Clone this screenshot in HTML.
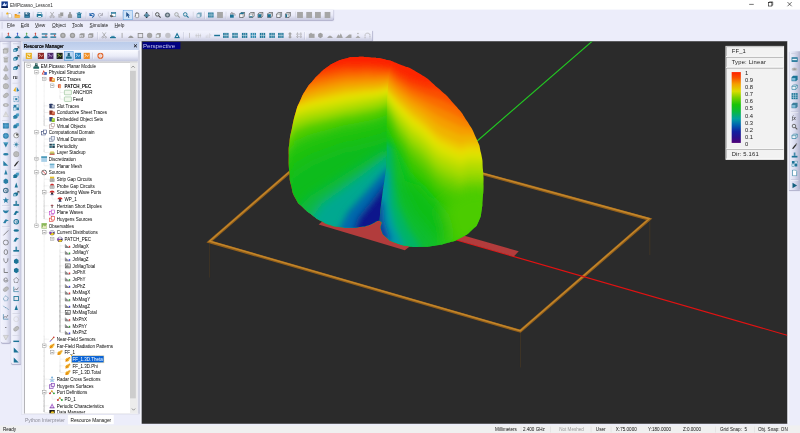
<!DOCTYPE html>
<html><head><meta charset="utf-8"><title>EMPicasso_Lesson1</title>
<style>
html,body{margin:0;padding:0;background:#ecedfa;overflow:hidden;width:800px;height:433px}
#root{position:absolute;left:0;top:0;width:1920px;height:1040px;transform:scale(0.4166667);transform-origin:0 0;
 font-family:"Liberation Sans",sans-serif;font-size:11px;color:#000;background:#ecedfa;overflow:hidden}
#root div,#root span,#root svg{position:absolute;box-sizing:border-box}
.ic{position:absolute}
.tb{background:linear-gradient(#f3f4fd 0%,#e9eaf8 55%,#c9cbe0 100%);border-radius:0 0 4px 0;box-shadow:0 2px 2px rgba(120,120,160,.5)}
.tbv{background:linear-gradient(90deg,#f3f4fd 0%,#e9eaf8 55%,#c4c6dc 100%);border-radius:0 0 4px 4px;box-shadow:1px 2px 2px rgba(120,120,160,.5)}
.grip{width:3px;border-left:2px solid #cbcde0}
.griph{height:3px;border-top:2px solid #cbcde0}
.t{white-space:nowrap;line-height:16px;height:16px}
#tree .t{font-size:10.8px}
.m{white-space:nowrap;top:53px;font-size:11.5px;line-height:16px;color:#1a1a1a}
.sb{white-space:nowrap;top:1023px;font-size:11px;line-height:16px;color:#111}
</style></head><body><div id="root">

<div style="left:0;top:0;width:1920px;height:23px;background:#fff"></div>
<svg style="left:3px;top:3px" width="16" height="16" viewBox="0 0 16 16"><rect width="16" height="16" fill="#123a8c"/><path d="M2 11 8 3l2 5 4-3-3 8z" fill="#dfe9ff"/><rect x="0" y="12" width="16" height="4" fill="#0a1f55"/></svg>
<div class="t" style="left:24px;top:4px;font-size:11px;color:#2a2a2a">EMPicasso_Lesson1</div>
<svg style="left:1780px;top:-2px" width="140" height="23" viewBox="0 0 140 23"><path d="M18 12.500h11" stroke="#000" stroke-width="1.300"/><rect x="64.5" y="8.500" width="8" height="8" fill="none" stroke="#000" stroke-width="1.300"/><path d="M66.500 8.500v-2h8v8h-2" fill="none" stroke="#000" stroke-width="1.300"/><path d="M110 7l10 10M120 7l-10 10" stroke="#000" stroke-width="1.400"/></svg>
<div class="tb" style="left:0;top:24px;width:800px;height:23px"></div>
<div class="grip" style="left:4px;top:29px;height:16px"></div>
<svg class="ic" style="left:14px;top:28px" width="16" height="16" viewBox="0 0 16 16"><path d="M5.500 4.500h5.500l3 3v7.500H5.500z" fill="#fff" stroke="#8a8a92"/><path d="M3.500 .5l1.100 2.300 2.400.3-1.800 1.700.5 2.500L3.500 6.100 1.300 7.300l.5-2.500L0 3.100l2.400-.3z" fill="#f2b21c"/></svg>
<svg class="ic" style="left:34px;top:28px" width="16" height="16" viewBox="0 0 16 16"><path d="M1 5.500h4.500l1.500 2H13v7H1z" fill="#e8961c"/><path d="M3 9h12.500l-2.500 5.500H1z" fill="#f7bc4c"/><path d="M9.500 4.500C10 2 12 1.500 14 2.500M14 2.500l-2.500-.6M14 2.500l-.8 2.300" stroke="#2a6fb0" fill="none" stroke-width="1.300"/></svg>
<svg class="ic" style="left:57px;top:28px" width="16" height="16" viewBox="0 0 16 16"><path d="M1.500 1.500h11l2 2v11h-13z" fill="#14557a"/><rect x="4" y="1.500" width="7" height="5" fill="#dfe9f2"/><rect x="8.500" y="2.300" width="1.700" height="3.200" fill="#14557a"/><rect x="3.500" y="9.500" width="9" height="5" fill="#3f86ad"/></svg>
<div style="position:absolute;left:79px;top:28px;width:1px;height:18px;background:#b4b6cc;box-shadow:1px 0 #fff"></div>
<svg class="ic" style="left:87px;top:28px" width="16" height="16" viewBox="0 0 16 16"><rect x="4" y="1.500" width="8" height="4.500" fill="#fff" stroke="#1b7396"/><rect x="1" y="5.500" width="14" height="7" rx="1.200" fill="#1b7396"/><rect x="4" y="10" width="8" height="4.500" fill="#fff" stroke="#1b7396"/><rect x="11.500" y="7" width="1.800" height="1.200" fill="#bfe6f4"/></svg>
<div style="position:absolute;left:110px;top:28px;width:1px;height:18px;background:#b4b6cc;box-shadow:1px 0 #fff"></div>
<svg class="ic" style="left:117px;top:28px" width="16" height="16" viewBox="0 0 16 16"><path d="M4 1 10.500 10.500M12 1 5.500 10.500" stroke="#9b9b9b" stroke-width="1.700"/><circle cx="4.500" cy="12.500" r="2" fill="none" stroke="#9b9b9b" stroke-width="1.500"/><circle cx="11.500" cy="12.500" r="2" fill="none" stroke="#9b9b9b" stroke-width="1.500"/></svg>
<svg class="ic" style="left:138px;top:28px" width="16" height="16" viewBox="0 0 16 16"><rect x="2" y="5.500" width="8" height="9" fill="#b2b2b6"/><rect x="6" y="1.500" width="8" height="9.500" fill="#9b9b9b" stroke="#e4e4ee" stroke-width=".8"/></svg>
<svg class="ic" style="left:160px;top:28px" width="16" height="16" viewBox="0 0 16 16"><path d="M3 15V8l5-6 5 6v7z" fill="#9b9b9b"/><rect x="6" y="1" width="4" height="2.500" fill="#9b9b9b"/></svg>
<svg class="ic" style="left:182px;top:28px" width="16" height="16" viewBox="0 0 16 16"><rect x="3.500" y="5.500" width="9" height="9.500" fill="#1b7396"/><rect x="2" y="2.800" width="12" height="2" fill="#1b7396"/><rect x="6" y="1" width="4" height="1.800" fill="#1b7396"/><path d="M6 7.500v6M8 7.500v6M10 7.500v6" stroke="#a9d6e8" stroke-width=".9"/></svg>
<div style="position:absolute;left:206px;top:28px;width:1px;height:18px;background:#b4b6cc;box-shadow:1px 0 #fff"></div>
<svg class="ic" style="left:213px;top:28px" width="16" height="16" viewBox="0 0 16 16"><path d="M3 3v6h6" fill="none" stroke="#1d5fa8" stroke-width="2.4"/><path d="M4 8C6 3 13 3 13 8 13 11 10 13 8 14" fill="none" stroke="#1d5fa8" stroke-width="2.4"/></svg>
<svg class="ic" style="left:233px;top:28px" width="16" height="16" viewBox="0 0 16 16"><path d="M13 3v6H7" fill="none" stroke="#a9a9b4" stroke-width="2.200"/><path d="M12 8C10 3 3 3 3 8 3 11 6 13 8 14" fill="none" stroke="#a9a9b4" stroke-width="2.200"/></svg>
<div style="position:absolute;left:259px;top:28px;width:1px;height:18px;background:#b4b6cc;box-shadow:1px 0 #fff"></div>
<svg class="ic" style="left:263px;top:28px" width="16" height="16" viewBox="0 0 16 16"><rect x="4" y="2" width="11" height="9" fill="#fff" stroke="#1b7396" stroke-width="1.200"/><rect x="4" y="2" width="11" height="2.800" fill="#1b7396"/><path d="M0 10l4.500-3v2h4v3.500h-4v2z" fill="#5a5a5a"/></svg>
<div style="position:absolute;left:293px;top:28px;width:1px;height:18px;background:#b4b6cc;box-shadow:1px 0 #fff"></div>
<div style="left:295px;top:25px;width:23px;height:23px;background:#cfe3f7;border:1px solid #3c8ad8"></div>
<svg class="ic" style="left:299px;top:28px" width="16" height="16" viewBox="0 0 16 16"><path d="M4 1 4 13 7 10 9.5 15 11.5 14 9 9.3 13 9Z" fill="#1d4f8c"/></svg>
<svg class="ic" style="left:321px;top:28px" width="16" height="16" viewBox="0 0 16 16"><path d="M4 9.500V5a1 1 0 012 0V3.200a1 1 0 012 0V3.600a1 1 0 012 0V5a1 1 0 012 0v6c0 2.500-1.500 4-4 4s-3.700-1.500-5-4.300c-.5-1 1-1.700 1.600-.7z" fill="#f4f4f4" stroke="#444" stroke-width="1.300"/></svg>
<svg class="ic" style="left:344px;top:28px" width="16" height="16" viewBox="0 0 16 16"><circle cx="8" cy="8.500" r="4.600" fill="#2f6d8c"/><path d="M8 0l3 3.500H5zM.5 9l3-3v5.500zM15.500 9l-3-3v5.500zM8 16l3-3H5z" fill="#27323a"/><ellipse cx="8" cy="8.500" rx="4.600" ry="1.800" fill="none" stroke="#cfe8f4" stroke-width=".8"/></svg>
<div style="position:absolute;left:365px;top:28px;width:1px;height:18px;background:#b4b6cc;box-shadow:1px 0 #fff"></div>
<svg class="ic" style="left:371px;top:28px" width="16" height="16" viewBox="0 0 16 16"><circle cx="6.5" cy="6.5" r="4.3" fill="#dfe6ee" stroke="#444" stroke-width="2"/><path d="M9.5 9.5 14.5 14.5" stroke="#444" stroke-width="2.6"/></svg>
<svg class="ic" style="left:394px;top:28px" width="16" height="16" viewBox="0 0 16 16"><circle cx="8" cy="8" r="6" fill="#5d6d78"/><circle cx="8" cy="8" r="3" fill="#d5dce2"/><rect x="1" y="7" width="14" height="2" fill="#5d6d78" opacity=".7"/></svg>
<svg class="ic" style="left:417px;top:28px" width="16" height="16" viewBox="0 0 16 16"><circle cx="6.5" cy="6.5" r="4.3" fill="#dfe6ee" stroke="#a2a2a2" stroke-width="2"/><path d="M9.5 9.5 14.5 14.5" stroke="#a2a2a2" stroke-width="2.6"/></svg>
<svg class="ic" style="left:438px;top:28px" width="16" height="16" viewBox="0 0 16 16"><circle cx="6.5" cy="6.5" r="4.3" fill="#dfe6ee" stroke="#1b7396" stroke-width="2"/><path d="M9.5 9.5 14.5 14.5" stroke="#1b7396" stroke-width="2.6"/></svg>
<div style="position:absolute;left:463px;top:28px;width:1px;height:18px;background:#b4b6cc;box-shadow:1px 0 #fff"></div>
<svg class="ic" style="left:470px;top:28px" width="16" height="16" viewBox="0 0 16 16"><path d="M2 5 6 2h8v9l-4 3H2Z" fill="#7aa7bd"/><rect x="3.4" y="6.2" width="6" height="6.4" fill="#e8eef6"/></svg>
<div style="position:absolute;left:491px;top:28px;width:1px;height:18px;background:#b4b6cc;box-shadow:1px 0 #fff"></div>
<svg class="ic" style="left:498px;top:28px" width="16" height="16" viewBox="0 0 16 16"><rect x="1.5" y="2" width="13" height="12" fill="#1b7396"/><path d="M1.5 8h13M6 2v12M10.5 2v12" stroke="#dfeaf2" stroke-width="1.3"/></svg>
<svg class="ic" style="left:520px;top:28px" width="16" height="16" viewBox="0 0 16 16"><rect x="1" y=".5" width="14" height="15" fill="#a6a6a6"/></svg>
<div style="position:absolute;left:542px;top:28px;width:1px;height:18px;background:#b4b6cc;box-shadow:1px 0 #fff"></div>
<svg class="ic" style="left:550px;top:28px" width="16" height="16" viewBox="0 0 16 16"><rect x="2" y="7" width="9" height="7.500" fill="#1b7396"/><path d="M4 7V5a2.500 2.500 0 015 0v2" fill="none" stroke="#444" stroke-width="1.500"/><path d="M10 4c3 0 5 2 4 6" fill="none" stroke="#555" stroke-width="1.300"/></svg>
<svg class="ic" style="left:573px;top:28px" width="16" height="16" viewBox="0 0 16 16"><path d="M2 5.500 5.500 2h8.500v8.500L10.500 14H2z" fill="#f4f6fa" stroke="#3c3c3c" stroke-width="1.400"/><path d="M2 5.500h8.500V14M10.500 5.500 14 2" stroke="#3c3c3c" stroke-width="1" fill="none"/><path d="M5.500 2h8.500L10.500 5.500H2z" fill="#1b7396"/></svg>
<svg class="ic" style="left:596px;top:28px" width="16" height="16" viewBox="0 0 16 16"><path d="M2 5.500 5.500 2h8.500v8.500L10.500 14H2z" fill="#f4f6fa" stroke="#3c3c3c" stroke-width="1.400"/><path d="M2 5.500h8.500V14M10.500 5.500 14 2" stroke="#3c3c3c" stroke-width="1" fill="none"/><path d="M2.600 11h7.300v2.400H2.600z" fill="#1b7396"/></svg>
<svg class="ic" style="left:617px;top:28px" width="16" height="16" viewBox="0 0 16 16"><path d="M2 5.500 5.500 2h8.500v8.500L10.500 14H2z" fill="#f4f6fa" stroke="#3c3c3c" stroke-width="1.400"/><path d="M2 5.500h8.500V14M10.500 5.500 14 2" stroke="#3c3c3c" stroke-width="1" fill="none"/><path d="M2.600 6.100h7.300v7.300H2.600z" fill="#1b7396"/></svg>
<svg class="ic" style="left:640px;top:28px" width="16" height="16" viewBox="0 0 16 16"><path d="M2 5.500 5.500 2h8.500v8.500L10.500 14H2z" fill="#f4f6fa" stroke="#3c3c3c" stroke-width="1.400"/><path d="M2 5.500h8.500V14M10.500 5.500 14 2" stroke="#3c3c3c" stroke-width="1" fill="none"/><path d="M2.600 6.100h7.300v7.300H2.600z" fill="#1b7396"/></svg>
<svg class="ic" style="left:662px;top:28px" width="16" height="16" viewBox="0 0 16 16"><path d="M2 5.500 5.500 2h8.500v8.500L10.500 14H2z" fill="#f4f6fa" stroke="#3c3c3c" stroke-width="1.400"/><path d="M2 5.500h8.500V14M10.500 5.500 14 2" stroke="#3c3c3c" stroke-width="1" fill="none"/><path d="M10.500 5.500 14 2v8.500L10.500 14z" fill="#8a96a0"/></svg>
<svg class="ic" style="left:683px;top:28px" width="16" height="16" viewBox="0 0 16 16"><path d="M2 5.500 5.500 2h8.500v8.500L10.500 14H2z" fill="#f4f6fa" stroke="#3c3c3c" stroke-width="1.400"/><path d="M2 5.500h8.500V14M10.500 5.500 14 2" stroke="#3c3c3c" stroke-width="1" fill="none"/><path d="M2.600 6.100h3.500v7.300H2.600z" fill="#1b7396"/></svg>
<div style="position:absolute;left:708px;top:28px;width:1px;height:18px;background:#b4b6cc;box-shadow:1px 0 #fff"></div>
<svg class="ic" style="left:712px;top:28px" width="16" height="16" viewBox="0 0 16 16"><rect x="1" y=".5" width="14" height="15" fill="#a6a6a6"/></svg>
<svg class="ic" style="left:734px;top:28px" width="16" height="16" viewBox="0 0 16 16"><rect x="1" y=".5" width="14" height="15" fill="#a6a6a6"/></svg>
<svg class="ic" style="left:755px;top:28px" width="16" height="16" viewBox="0 0 16 16"><rect x="1" y=".5" width="14" height="15" fill="#a6a6a6"/></svg>
<svg class="ic" style="left:778px;top:28px" width="16" height="16" viewBox="0 0 16 16"><rect x="1" y=".5" width="14" height="15" fill="#a6a6a6"/></svg>
<div class="grip" style="left:4px;top:53px;height:16px"></div>
<div class="m" style="left:17px"><u>F</u>ile</div>
<div class="m" style="left:50px"><u>E</u>dit</div>
<div class="m" style="left:84px"><u>V</u>iew</div>
<div class="m" style="left:125px"><u>O</u>bject</div>
<div class="m" style="left:173px"><u>T</u>ools</div>
<div class="m" style="left:215px"><u>S</u>imulate</div>
<div class="m" style="left:275px"><u>H</u>elp</div>
<div class="tb" style="left:0;top:73px;width:893px;height:25px"></div>
<div class="grip" style="left:4px;top:78px;height:16px"></div>
<svg class="ic" style="left:12px;top:77px" width="16" height="16" viewBox="0 0 16 16"><path d="M1 11.500h14V15H1z" fill="#1b7396"/><path d="M3 11.500l2-2.500h6l2 2.500z" fill="#4a93b3"/><rect x="7" y="2" width="2" height="7" fill="#c8463a"/><path d="M5.500 4 8 .8 10.500 4z" fill="#c8463a"/></svg>
<svg class="ic" style="left:34px;top:77px" width="16" height="16" viewBox="0 0 16 16"><path d="M1 11.500h14V15H1z" fill="#1b7396"/><path d="M3 11.500l2-2.500h6l2 2.500z" fill="#4a93b3"/><rect x="7" y="2" width="2" height="7" fill="#3a56c8"/><path d="M5.500 4 8 .8 10.500 4z" fill="#3a56c8"/></svg>
<svg class="ic" style="left:56px;top:77px" width="16" height="16" viewBox="0 0 16 16"><path d="M1 11.500h14V15H1z" fill="#1b7396"/><path d="M3 11.500l2-2.500h6l2 2.500z" fill="#4a93b3"/><rect x="7" y="2" width="2" height="7" fill="#58a848"/><path d="M5.500 4 8 .8 10.500 4z" fill="#58a848"/></svg>
<svg class="ic" style="left:77px;top:77px" width="16" height="16" viewBox="0 0 16 16"><path d="M1 11.500h14V15H1z" fill="#1b7396"/><path d="M3 11.500l2-2.500h6l2 2.500z" fill="#4a93b3"/><rect x="7" y="2" width="2" height="7" fill="#c8463a"/><path d="M5.500 4 8 .8 10.500 4z" fill="#c8463a"/></svg>
<svg class="ic" style="left:99px;top:77px" width="16" height="16" viewBox="0 0 16 16"><rect x="1" y="3" width="14" height="3.200" fill="#1b7396"/><rect x="1" y="10.500" width="14" height="3.200" fill="#1b7396"/><rect x="10" y="6.200" width="2.500" height="4.300" fill="#c8463a"/><rect x="3" y="6.500" width="7" height="1" fill="#bcd"/></svg>
<svg class="ic" style="left:120px;top:77px" width="16" height="16" viewBox="0 0 16 16"><rect x="1" y="3" width="14" height="3.200" fill="#1b7396"/><rect x="1" y="10.500" width="14" height="3.200" fill="#1b7396"/><rect x="10" y="6.200" width="2.500" height="4.300" fill="#c8463a"/><rect x="3" y="6.500" width="7" height="1" fill="#bcd"/></svg>
<svg class="ic" style="left:143px;top:77px" width="16" height="16" viewBox="0 0 16 16"><circle cx="8" cy="8" r="6.500" fill="#9b9b9b"/><circle cx="8" cy="8" r="3.200" fill="#b8b8b8"/></svg>
<svg class="ic" style="left:166px;top:77px" width="16" height="16" viewBox="0 0 16 16"><circle cx="8" cy="8" r="6.500" fill="#9b9b9b"/><circle cx="8" cy="8" r="3.200" fill="#b8b8b8"/></svg>
<svg class="ic" style="left:189px;top:77px" width="16" height="16" viewBox="0 0 16 16"><path d="M2 5.500 5 2.500h9v8.500l-3 3H2z" fill="#9b9b9b"/><rect x="3.500" y="7" width="6" height="5.500" fill="#dcdce4"/><rect x="5.500" y="8.200" width="1.800" height="3.200" fill="#9b9b9b"/></svg>
<svg class="ic" style="left:210px;top:77px" width="16" height="16" viewBox="0 0 16 16"><path d="M2 5.500 5 2.500h9v8.500l-3 3H2z" fill="#9b9b9b"/><rect x="3.500" y="7" width="6" height="5.500" fill="#dcdce4"/><rect x="5.500" y="8.200" width="1.800" height="3.200" fill="#9b9b9b"/></svg>
<div style="position:absolute;left:234px;top:77px;width:1px;height:18px;background:#b4b6cc;box-shadow:1px 0 #fff"></div>
<svg class="ic" style="left:242px;top:77px" width="16" height="16" viewBox="0 0 16 16"><path d="M4 1 10.500 10.500M12 1 5.500 10.500" stroke="#9b9b9b" stroke-width="1.700"/><circle cx="4.500" cy="12.500" r="2" fill="none" stroke="#9b9b9b" stroke-width="1.500"/><circle cx="11.500" cy="12.500" r="2" fill="none" stroke="#9b9b9b" stroke-width="1.500"/></svg>
<svg class="ic" style="left:263px;top:77px" width="16" height="16" viewBox="0 0 16 16"><path d="M1 11.500h14V15H1z" fill="#1b7396"/><path d="M3 11.500l2-2.500h6l2 2.500z" fill="#4a93b3"/><rect x="7" y="2" width="2" height="7" fill="#e8eef4"/><path d="M5.500 4 8 .8 10.500 4z" fill="#e8eef4"/></svg>
<svg class="ic" style="left:285px;top:77px" width="16" height="16" viewBox="0 0 16 16"><rect x="7" y="2" width="2" height="12" fill="#9b9b9b"/></svg>
<svg class="ic" style="left:306px;top:77px" width="16" height="16" viewBox="0 0 16 16"><path d="M1 14Q8 2 15 14Z" fill="#9b9b9b"/></svg>
<svg class="ic" style="left:329px;top:77px" width="16" height="16" viewBox="0 0 16 16"><rect x="2.5" y="3.5" width="11" height="10" fill="#e6e6ee" stroke="#8a8a8a" stroke-width="2"/></svg>
<svg class="ic" style="left:351px;top:77px" width="16" height="16" viewBox="0 0 16 16"><circle cx="8" cy="8" r="6.5" fill="#a5a5a5"/></svg>
<svg class="ic" style="left:372px;top:77px" width="16" height="16" viewBox="0 0 16 16"><path d="M2 5 6 2h8v9l-4 3H2Z" fill="#a5a5a5"/><rect x="3.4" y="6.2" width="6" height="6.4" fill="#e8eef6"/></svg>
<svg class="ic" style="left:395px;top:77px" width="16" height="16" viewBox="0 0 16 16"><circle cx="8" cy="8" r="6.5" fill="#c2c2c8"/></svg>
<svg class="ic" style="left:417px;top:77px" width="16" height="16" viewBox="0 0 16 16"><path d="M8 1 15 15H1Z" fill="#1b7396"/><path d="M8 7 10.5 12h-5z" fill="#fff"/></svg>
<div style="position:absolute;left:440px;top:77px;width:1px;height:18px;background:#b4b6cc;box-shadow:1px 0 #fff"></div>
<svg class="ic" style="left:447px;top:77px" width="16" height="16" viewBox="0 0 16 16"><rect x="7" y="2" width="2" height="12" fill="#bdbdbd"/></svg>
<svg class="ic" style="left:468px;top:77px" width="16" height="16" viewBox="0 0 16 16"><path d="M3 4v9M8 3v11M13 4v9M1 8.500h14" stroke="#b8b8b8" stroke-width="1.100" fill="none"/></svg>
<svg class="ic" style="left:492px;top:77px" width="16" height="16" viewBox="0 0 16 16"><path d="M3 8v6M7 6v8M11 3v11M14 5v4" stroke="#c2c2c2" stroke-width="1.100" fill="none"/></svg>
<svg class="ic" style="left:513px;top:77px" width="16" height="16" viewBox="0 0 16 16"><rect x="1" y="6.5" width="14" height="3.4" fill="#1b7396"/></svg>
<svg class="ic" style="left:534px;top:77px" width="16" height="16" viewBox="0 0 16 16"><rect x="1.5" y="2" width="13" height="12" fill="#1b7396"/><path d="M1.5 8h13M6 2v12M10.5 2v12" stroke="#dfeaf2" stroke-width="1.3"/></svg>
<svg class="ic" style="left:556px;top:77px" width="16" height="16" viewBox="0 0 16 16"><rect x="1.5" y="2" width="13" height="12" fill="#1b7396"/><path d="M1.5 8h13M6 2v12M10.5 2v12" stroke="#dfeaf2" stroke-width="1.3"/></svg>
<svg class="ic" style="left:579px;top:77px" width="16" height="16" viewBox="0 0 16 16"><rect x="1.5" y="2" width="13" height="12" fill="#1b7396"/><path d="M1.5 8h13M6 2v12M10.5 2v12" stroke="#dfeaf2" stroke-width="1.3"/></svg>
<svg class="ic" style="left:600px;top:77px" width="16" height="16" viewBox="0 0 16 16"><rect x="1.5" y="2" width="13" height="12" fill="#2b86ad"/><path d="M1.5 8h13M6 2v12M10.5 2v12" stroke="#dfeaf2" stroke-width="1.3"/></svg>
<svg class="ic" style="left:622px;top:77px" width="16" height="16" viewBox="0 0 16 16"><rect x="1.5" y="2" width="13" height="12" fill="#1b7396"/><path d="M1.5 8h13M6 2v12M10.5 2v12" stroke="#dfeaf2" stroke-width="1.3"/></svg>
<svg class="ic" style="left:645px;top:77px" width="16" height="16" viewBox="0 0 16 16"><rect x="1.5" y="2" width="13" height="12" fill="#1b7396"/><path d="M1.5 8h13M6 2v12M10.5 2v12" stroke="#dfeaf2" stroke-width="1.3"/></svg>
<svg class="ic" style="left:666px;top:77px" width="16" height="16" viewBox="0 0 16 16"><rect x="1.5" y="2" width="13" height="12" fill="#1b7396"/><path d="M1.5 8h13M6 2v12M10.5 2v12" stroke="#dfeaf2" stroke-width="1.3"/></svg>
<svg class="ic" style="left:688px;top:77px" width="16" height="16" viewBox="0 0 16 16"><path d="M8 0 13 5H10v6h3L8 16 3 11h3V5H3z" fill="#a4a4a4"/></svg>
<svg class="ic" style="left:710px;top:77px" width="16" height="16" viewBox="0 0 16 16"><path d="M4 1v14M12 1v14M1 5h14M1 11h14" stroke="#9a9a9a" stroke-width="1.800" stroke-dasharray="3 2"/></svg>
<div style="position:absolute;left:731px;top:77px;width:1px;height:18px;background:#b4b6cc;box-shadow:1px 0 #fff"></div>
<svg class="ic" style="left:740px;top:77px" width="16" height="16" viewBox="0 0 16 16"><rect x="1" y="4" width="14" height="10" fill="#a4a4a4"/><rect x="4" y="2" width="5" height="2" fill="#a4a4a4"/></svg>
<svg class="ic" style="left:761px;top:77px" width="16" height="16" viewBox="0 0 16 16"><path d="M8 1.500 13.500 4.700v6.600L8 14.500 2.500 11.300V4.700z" fill="#a0a0a0"/></svg>
<svg class="ic" style="left:784px;top:77px" width="16" height="16" viewBox="0 0 16 16"><path d="M1 14Q8 2 15 14Z" fill="#a4a4a4"/></svg>
<svg class="ic" style="left:807px;top:77px" width="16" height="16" viewBox="0 0 16 16"><path d="M0 14 5 5l3 4 3-6 5 11z" fill="#a4a4a4"/></svg>
<svg class="ic" style="left:828px;top:77px" width="16" height="16" viewBox="0 0 16 16"><path d="M0 14 10 6h6v8z" fill="#a4a4a4"/></svg>
<svg class="ic" style="left:851px;top:77px" width="16" height="16" viewBox="0 0 16 16"><circle cx="8" cy="3.500" r="1.800" fill="#a9a9a9"/><path d="M2 14 8 8l6 6z" fill="#a9a9a9"/></svg>
<svg class="ic" style="left:874px;top:77px" width="16" height="16" viewBox="0 0 16 16"><path d="M2 15V7c0-6 12-6 12 0v8" fill="none" stroke="#a4a4a4" stroke-width="2" stroke-dasharray="3 1.500"/></svg>
<div class="tbv" style="left:2px;top:100px;width:23px;height:722px"></div>
<div class="griph" style="left:6px;top:104px;width:16px"></div>
<div class="tbv" style="left:27px;top:100px;width:24px;height:773px"></div>
<div class="griph" style="left:31px;top:104px;width:16px"></div>
<svg class="ic" style="left:6px;top:113px" width="16" height="16" viewBox="0 0 16 16"><path d="M1.500 5 5 1.500h9.500v9.500L11 14.500H1.500z" fill="#b9b9b9"/><rect x="1.500" y="5" width="9.500" height="9.500" fill="#cacaca" stroke="#8c8c8c"/></svg>
<svg class="ic" style="left:6px;top:135px" width="16" height="16" viewBox="0 0 16 16"><rect x="3" y="3.500" width="10" height="9.500" fill="#bcbcbc"/><ellipse cx="8" cy="13" rx="5" ry="2" fill="#b0b0b0"/><ellipse cx="8" cy="3.500" rx="5" ry="2" fill="#dedede" stroke="#8c8c8c"/></svg>
<svg class="ic" style="left:6px;top:156px" width="16" height="16" viewBox="0 0 16 16"><path d="M8 1 13.500 12.500c0 3-11 3-11 0z" fill="#bcbcbc" stroke="#8e8e8e"/></svg>
<svg class="ic" style="left:6px;top:177px" width="16" height="16" viewBox="0 0 16 16"><path d="M8 1 14.500 12 8 15 1.500 12z" fill="#c0c0c0" stroke="#8c8c8c"/><path d="M8 1v14" stroke="#8e8e8e"/></svg>
<svg class="ic" style="left:6px;top:199px" width="16" height="16" viewBox="0 0 16 16"><circle cx="8" cy="8" r="6.500" fill="#bebebe" stroke="#8e8e8e"/><path d="M8 1.500v13" stroke="#b0b0b0"/></svg>
<svg class="ic" style="left:6px;top:221px" width="16" height="16" viewBox="0 0 16 16"><ellipse cx="8" cy="8" rx="7" ry="4.500" transform="rotate(-35 8 8)" fill="#bcbcbc" stroke="#8e8e8e"/></svg>
<svg class="ic" style="left:6px;top:244px" width="16" height="16" viewBox="0 0 16 16"><ellipse cx="8" cy="8" rx="6.500" ry="3.600" fill="#bebebe" stroke="#8e8e8e"/><ellipse cx="8" cy="8" rx="2.500" ry="1" fill="#f0f0f4"/></svg>
<svg class="ic" style="left:6px;top:266px" width="16" height="16" viewBox="0 0 16 16"><path d="M8 2 14 14H2z" fill="#e6e6e6" stroke="#b4b4b4"/><path d="M8 6v5" stroke="#b4b4b4"/></svg>
<div style="position:absolute;left:5px;top:288px;width:18px;height:1px;background:#b4b6cc;box-shadow:0 1px #fff"></div>
<svg class="ic" style="left:6px;top:294px" width="16" height="16" viewBox="0 0 16 16"><rect x="1.500" y="2.500" width="13" height="11" fill="#3a8fc0" stroke="#1f6f96" stroke-width="1.400"/><path d="M1.500 8h13M8 2.500v11" stroke="#8cc4e0" stroke-width=".8"/></svg>
<svg class="ic" style="left:6px;top:318px" width="16" height="16" viewBox="0 0 16 16"><circle cx="8" cy="8" r="6.300" fill="#3a8fc0" stroke="#1f6f96" stroke-width="1.400"/><path d="M1.700 8h12.600M8 1.700v12.600" stroke="#8cc4e0" stroke-width=".8"/></svg>
<svg class="ic" style="left:6px;top:339px" width="16" height="16" viewBox="0 0 16 16"><path d="M2 3h12L8 15z" fill="#2a7fa6"/><ellipse cx="8" cy="3.500" rx="6" ry="2" fill="#6fb4d4"/></svg>
<svg class="ic" style="left:6px;top:362px" width="16" height="16" viewBox="0 0 16 16"><ellipse cx="8" cy="8" rx="6.500" ry="3" fill="#2a7fa6"/></svg>
<svg class="ic" style="left:6px;top:384px" width="16" height="16" viewBox="0 0 16 16"><path d="M2 2v12h12z" fill="#2a7fa6"/></svg>
<svg class="ic" style="left:6px;top:405px" width="16" height="16" viewBox="0 0 16 16"><path d="M8 2 12 14H4z" fill="#2a7fa6"/></svg>
<svg class="ic" style="left:6px;top:427px" width="16" height="16" viewBox="0 0 16 16"><path d="M8 1.500 13.500 4.700v6.600L8 14.500 2.500 11.300V4.700z" fill="#2a7fa6"/></svg>
<svg class="ic" style="left:6px;top:449px" width="16" height="16" viewBox="0 0 16 16"><circle cx="8" cy="8" r="5.500" fill="none" stroke="#3a6a86" stroke-width="2.400"/><circle cx="9" cy="8.500" r="2" fill="none" stroke="#3a6a86" stroke-width="1.500"/></svg>
<svg class="ic" style="left:6px;top:472px" width="16" height="16" viewBox="0 0 16 16"><path d="M8 1l2 5 5.500.3-4.300 3.400 1.500 5.300L8 12l-4.700 3 1.500-5.300L.5 6.300 6 6z" fill="#2a7fa6"/></svg>
<div style="position:absolute;left:5px;top:493px;width:18px;height:1px;background:#b4b6cc;box-shadow:0 1px #fff"></div>
<svg class="ic" style="left:6px;top:499px" width="16" height="16" viewBox="0 0 16 16"><path d="M1 5c2 2 12 2 14 0 0 10-14 10-14 0z" fill="#2a7fa6"/></svg>
<svg class="ic" style="left:6px;top:522px" width="16" height="16" viewBox="0 0 16 16"><path d="M1 13c3-1 3-8 7-9 3 0 3 3 7 2-2 3-5 2-6 4s-1 4-3 4z" fill="#2a7fa6"/></svg>
<div style="position:absolute;left:5px;top:544px;width:18px;height:1px;background:#b4b6cc;box-shadow:0 1px #fff"></div>
<svg class="ic" style="left:6px;top:551px" width="16" height="16" viewBox="0 0 16 16"><path d="M2 14 14 2" stroke="#444" stroke-width="1.400"/></svg>
<svg class="ic" style="left:6px;top:574px" width="16" height="16" viewBox="0 0 16 16"><circle cx="8" cy="8" r="6" fill="none" stroke="#555" stroke-width="1.500"/></svg>
<svg class="ic" style="left:6px;top:597px" width="16" height="16" viewBox="0 0 16 16"><ellipse cx="8" cy="8" rx="4.200" ry="6" fill="none" stroke="#555" stroke-width="1.500"/></svg>
<svg class="ic" style="left:6px;top:618px" width="16" height="16" viewBox="0 0 16 16"><path d="M3 2c0 14 10 14 10 0" fill="none" stroke="#555" stroke-width="1.500"/></svg>
<svg class="ic" style="left:6px;top:642px" width="16" height="16" viewBox="0 0 16 16"><path d="M4 2v10h9" fill="none" stroke="#555" stroke-width="1.700"/></svg>
<svg class="ic" style="left:6px;top:664px" width="16" height="16" viewBox="0 0 16 16"><path d="M13 8a5 5 0 11-5-5 3.500 3.500 0 11-3.500 3.500" fill="none" stroke="#666" stroke-width="1.400"/></svg>
<svg class="ic" style="left:6px;top:686px" width="16" height="16" viewBox="0 0 16 16"><ellipse cx="8" cy="8" rx="7" ry="4.500" transform="rotate(-35 8 8)" fill="#bcbcbc" stroke="#8e8e8e"/></svg>
<svg class="ic" style="left:6px;top:708px" width="16" height="16" viewBox="0 0 16 16"><path d="M8 2 14 7 11 14H4L2 7z" fill="none" stroke="#2a6f96" stroke-width="1.600" stroke-dasharray="2 1.500"/></svg>
<svg class="ic" style="left:6px;top:730px" width="16" height="16" viewBox="0 0 16 16"><path d="M2 4 6 8 10 9 14 13" fill="none" stroke="#2a6f96" stroke-width="1.800" stroke-dasharray="3 1.500"/></svg>
<svg class="ic" style="left:6px;top:752px" width="16" height="16" viewBox="0 0 16 16"><path d="M2 2v12h12" fill="none" stroke="#2a6f96" stroke-width="1.500"/><path d="M3 11 6 7l3 3 4-6" fill="none" stroke="#333" stroke-width="1.200"/></svg>
<svg class="ic" style="left:6px;top:778px" width="16" height="16" viewBox="0 0 16 16"><circle cx="8" cy="8" r="1.300" fill="#333"/></svg>
<svg class="ic" style="left:6px;top:802px" width="16" height="16" viewBox="0 0 16 16"><path d="M2 3h12L8 14z" fill="#dcdcdc" stroke="#aaa"/></svg>
<svg class="ic" style="left:31px;top:111px" width="16" height="16" viewBox="0 0 16 16"><path d="M1 7 5 4h7v6l-4 3H1z" fill="#1b7396"/><rect x="2" y="8" width="5" height="4" fill="#9fd0e6"/><path d="M10 1h5v5" stroke="#222" stroke-width="1.500" fill="none"/><path d="M15 1 10 6" stroke="#222" stroke-width="1.300"/></svg>
<svg class="ic" style="left:31px;top:132px" width="16" height="16" viewBox="0 0 16 16"><path d="M1 7 5 4h7v6l-4 3H1z" fill="#1b7396"/><rect x="2" y="8" width="5" height="4" fill="#9fd0e6"/><path d="M10 1h5v5" stroke="#222" stroke-width="1.500" fill="none"/><path d="M15 1 10 6" stroke="#222" stroke-width="1.300"/></svg>
<svg class="ic" style="left:31px;top:155px" width="16" height="16" viewBox="0 0 16 16"><path d="M1 7 5 4h7v6l-4 3H1z" fill="#1b7396"/><rect x="2" y="8" width="5" height="4" fill="#9fd0e6"/><path d="M10 1h5v5" stroke="#222" stroke-width="1.500" fill="none"/><path d="M15 1 10 6" stroke="#222" stroke-width="1.300"/></svg>
<svg class="ic" style="left:31px;top:178px" width="16" height="16" viewBox="0 0 16 16"><text x="0" y="12" font-family="Liberation Sans,sans-serif" font-weight="bold" font-size="11" fill="#222">ru</text></svg>
<div style="position:absolute;left:30px;top:199px;width:18px;height:1px;background:#b4b6cc;box-shadow:0 1px #fff"></div>
<svg class="ic" style="left:31px;top:206px" width="16" height="16" viewBox="0 0 16 16"><path d="M7 2v12L1 12z" fill="#e8b020"/><path d="M9 2v12l6-2z" fill="#2a7fb0"/></svg>
<svg class="ic" style="left:31px;top:230px" width="16" height="16" viewBox="0 0 16 16"><rect x="2" y="2" width="12" height="12" fill="none" stroke="#2a7fa6" stroke-width="1.500" stroke-dasharray="2 1.300"/><rect x="5.500" y="5.500" width="5" height="5" fill="#2a7fa6"/></svg>
<svg class="ic" style="left:31px;top:250px" width="16" height="16" viewBox="0 0 16 16"><rect x="1.500" y="1.500" width="6" height="6" fill="#2a7fa6"/><rect x="8.500" y="8.500" width="6" height="6" fill="#2a7fa6"/><rect x="8.500" y="1.500" width="6" height="6" fill="#cfe4f0" stroke="#2a7fa6"/><rect x="1.500" y="8.500" width="6" height="6" fill="#cfe4f0" stroke="#2a7fa6"/></svg>
<svg class="ic" style="left:31px;top:271px" width="16" height="16" viewBox="0 0 16 16"><path d="M1 8 4 5h7v6l-3 3H1z" fill="#2a7fa6"/><path d="M6 4 9 1h6v6l-3 3" fill="#4a9cc4" stroke="#e8eef4" stroke-width=".7"/></svg>
<svg class="ic" style="left:31px;top:294px" width="16" height="16" viewBox="0 0 16 16"><path d="M1 8 4 5h7v6l-3 3H1z" fill="#2a7fa6"/><path d="M6 4 9 1h6v6l-3 3" fill="#4a9cc4" stroke="#e8eef4" stroke-width=".7"/></svg>
<svg class="ic" style="left:31px;top:317px" width="16" height="16" viewBox="0 0 16 16"><circle cx="8" cy="8" r="6" fill="#f4f4f4" stroke="#555" stroke-width="1.300"/><path d="M8 8V3.500A4.500 4.500 0 0112.500 8z" fill="#333"/></svg>
<svg class="ic" style="left:31px;top:339px" width="16" height="16" viewBox="0 0 16 16"><circle cx="8" cy="8" r="3" fill="#3d87a8"/><path d="M8 1v14M1 8h14M3 3l10 10M13 3 3 13" stroke="#3d87a8" stroke-width="1"/></svg>
<svg class="ic" style="left:31px;top:362px" width="16" height="16" viewBox="0 0 16 16"><circle cx="8" cy="8" r="6.500" fill="#bebebe" stroke="#8e8e8e"/><path d="M8 1.500v13" stroke="#b0b0b0"/></svg>
<svg class="ic" style="left:31px;top:384px" width="16" height="16" viewBox="0 0 16 16"><path d="M3 13 10 4l2.500 2L5.500 15 2.500 15.500z" fill="#2a2a2a"/><path d="M10.500 3.500 12.500 1.500 14.500 3.500 12.800 5.500z" fill="#555"/></svg>
<div style="position:absolute;left:30px;top:407px;width:18px;height:1px;background:#b4b6cc;box-shadow:0 1px #fff"></div>
<svg class="ic" style="left:31px;top:413px" width="16" height="16" viewBox="0 0 16 16"><path d="M1 8 4 5h7v6l-3 3H1z" fill="#1b7396"/><path d="M6 4 9 1h6v6l-3 3" fill="#4a9cc4" stroke="#e8eef4" stroke-width=".7"/></svg>
<svg class="ic" style="left:31px;top:436px" width="16" height="16" viewBox="0 0 16 16"><path d="M8 2 12 14H4z" fill="#1b7396"/></svg>
<svg class="ic" style="left:31px;top:458px" width="16" height="16" viewBox="0 0 16 16"><path d="M1 7 5 4h7v6l-4 3H1z" fill="#1b7396"/><rect x="2" y="8" width="5" height="4" fill="#9fd0e6"/><path d="M10 1h5v5" stroke="#222" stroke-width="1.500" fill="none"/><path d="M15 1 10 6" stroke="#222" stroke-width="1.300"/></svg>
<svg class="ic" style="left:31px;top:480px" width="16" height="16" viewBox="0 0 16 16"><rect x="1" y="10" width="14" height="4" fill="#1b7396"/><rect x="6" y="2" width="4" height="8" fill="#1b7396" opacity=".8"/></svg>
<svg class="ic" style="left:31px;top:502px" width="16" height="16" viewBox="0 0 16 16"><path d="M1 13c3-1 3-8 7-9 3 0 3 3 7 2-2 3-5 2-6 4s-1 4-3 4z" fill="#1b7396"/></svg>
<svg class="ic" style="left:31px;top:524px" width="16" height="16" viewBox="0 0 16 16"><circle cx="8" cy="8" r="5.500" fill="none" stroke="#1b7396" stroke-width="2.400"/><circle cx="9" cy="8.500" r="2" fill="none" stroke="#1b7396" stroke-width="1.500"/></svg>
<svg class="ic" style="left:31px;top:545px" width="16" height="16" viewBox="0 0 16 16"><ellipse cx="8" cy="8" rx="6.500" ry="3" fill="#1b7396"/></svg>
<svg class="ic" style="left:31px;top:566px" width="16" height="16" viewBox="0 0 16 16"><path d="M1 13c3-1 3-8 7-9 3 0 3 3 7 2-2 3-5 2-6 4s-1 4-3 4z" fill="#1b7396"/></svg>
<svg class="ic" style="left:31px;top:590px" width="16" height="16" viewBox="0 0 16 16"><rect x="1" y="10" width="14" height="4" fill="#1b7396"/><rect x="6" y="2" width="4" height="8" fill="#1b7396" opacity=".8"/></svg>
<div style="position:absolute;left:30px;top:612px;width:18px;height:1px;background:#b4b6cc;box-shadow:0 1px #fff"></div>
<svg class="ic" style="left:31px;top:619px" width="16" height="16" viewBox="0 0 16 16"><path d="M8 1.500 13.500 4.700v6.600L8 14.500 2.500 11.300V4.700z" fill="#1b7396"/></svg>
<svg class="ic" style="left:31px;top:641px" width="16" height="16" viewBox="0 0 16 16"><path d="M8 1.500 13.500 4.700v6.600L8 14.500 2.500 11.300V4.700z" fill="#1b7396"/></svg>
<svg class="ic" style="left:31px;top:664px" width="16" height="16" viewBox="0 0 16 16"><path d="M8 2 14 7 11 14H4L2 7z" fill="none" stroke="#333" stroke-width="1.600" stroke-dasharray="2 1.500"/></svg>
<svg class="ic" style="left:31px;top:686px" width="16" height="16" viewBox="0 0 16 16"><path d="M2 2v12h12" fill="none" stroke="#1b7396" stroke-width="1.500"/><path d="M3 11 6 7l3 3 4-6" fill="none" stroke="#333" stroke-width="1.200"/></svg>
<svg class="ic" style="left:31px;top:708px" width="16" height="16" viewBox="0 0 16 16"><rect x="2.5" y="3.5" width="11" height="10" fill="#e6e6ee" stroke="#1b7396" stroke-width="2"/></svg>
<svg class="ic" style="left:31px;top:730px" width="16" height="16" viewBox="0 0 16 16"><path d="M8 2 12 14H4z" fill="#1b7396"/></svg>
<div style="position:absolute;left:30px;top:752px;width:18px;height:1px;background:#b4b6cc;box-shadow:0 1px #fff"></div>
<svg class="ic" style="left:31px;top:758px" width="16" height="16" viewBox="0 0 16 16"><circle cx="8" cy="8" r="6" fill="none" stroke="#d0d0d4" stroke-width="1.500"/></svg>
<svg class="ic" style="left:31px;top:781px" width="16" height="16" viewBox="0 0 16 16"><ellipse cx="8" cy="8" rx="7" ry="4.500" transform="rotate(-35 8 8)" fill="#bcbcbc" stroke="#8e8e8e"/></svg>
<div style="position:absolute;left:30px;top:804px;width:18px;height:1px;background:#b4b6cc;box-shadow:0 1px #fff"></div>
<svg class="ic" style="left:31px;top:811px" width="16" height="16" viewBox="0 0 16 16"><rect x="1" y="6.5" width="14" height="3.4" fill="#1b7396"/></svg>
<svg class="ic" style="left:31px;top:832px" width="16" height="16" viewBox="0 0 16 16"><path d="M2 2v12h12z" fill="#1b7396"/></svg>
<svg class="ic" style="left:31px;top:856px" width="16" height="16" viewBox="0 0 16 16"><path d="M2 2v12h12z" fill="#1b7396"/></svg>
<div style="left:51px;top:99px;width:284px;height:896px;background:#f1f2fa;border:1px solid #d4d6e6"></div>
<div style="left:54px;top:100px;width:280px;height:20px;background:linear-gradient(#bacbea,#c9d7f0)"></div>
<div class="t" style="left:57px;top:102px;font-size:11.3px;color:#000;text-shadow:0 0 .4px #000">Resource Manager</div>
<svg style="left:319px;top:104px" width="12" height="12" viewBox="0 0 12 12"><path d="M2.500 2.500 9.500 9.500M9.500 2.500 2.500 9.500" stroke="#000" stroke-width="2"/></svg>
<div style="left:54px;top:120px;width:280px;height:27px;background:linear-gradient(#fafbff 0%,#e9ebf7 55%,#c3c7df 100%)"></div>
<svg class="ic" style="left:61px;top:126px" width="16" height="16" viewBox="0 0 16 16"><rect x=".5" y=".5" width="15" height="15" fill="#e8b024"/><path d="M4 4h6v3M10 7 7 4.500M10 7l2.500-2.500M5 8v4h7" stroke="#fff8e0" stroke-width="1.700" fill="none"/></svg>
<svg class="ic" style="left:90px;top:126px" width="16" height="16" viewBox="0 0 16 16"><rect x=".5" y=".5" width="15" height="15" fill="#8c2424"/><path d="M3 12 7 6l3 4 3-5" stroke="#f0c8b0" stroke-width="1.600" fill="none"/><rect x="3" y="3" width="4" height="3" fill="#f0c8b0" opacity=".7"/></svg>
<svg class="ic" style="left:113px;top:126px" width="16" height="16" viewBox="0 0 16 16"><rect x=".5" y=".5" width="15" height="15" fill="#4a2a66"/><path d="M3 12 7 6l3 4 3-5" stroke="#c8a8e0" stroke-width="1.600" fill="none"/><rect x="3" y="3" width="4" height="3" fill="#c8a8e0" opacity=".7"/></svg>
<svg class="ic" style="left:135px;top:126px" width="16" height="16" viewBox="0 0 16 16"><rect x=".5" y=".5" width="15" height="15" fill="#1c201c"/><path d="M3 12 7 6l3 4 3-5" stroke="#9ad040" stroke-width="1.600" fill="none"/><rect x="3" y="3" width="4" height="3" fill="#9ad040" opacity=".7"/></svg>
<div style="left:154px;top:123px;width:22px;height:22px;background:#bcd8f4;border:1px solid #2f7fd0"></div>
<svg class="ic" style="left:157px;top:126px" width="16" height="16" viewBox="0 0 16 16"><path d="M5.500 1h5v5.500l2.500 3H3l2.500-3z" fill="#1d5f78"/><rect x="1" y="10" width="14" height="5" fill="#1d6f8c"/></svg>
<svg class="ic" style="left:179px;top:126px" width="16" height="16" viewBox="0 0 16 16"><rect x=".5" y=".5" width="15" height="15" fill="#2380c0"/><path d="M3 12 7 6l3 4 3-5" stroke="#c8e4f8" stroke-width="1.600" fill="none"/><rect x="3" y="3" width="4" height="3" fill="#c8e4f8" opacity=".7"/></svg>
<svg class="ic" style="left:200px;top:126px" width="16" height="16" viewBox="0 0 16 16"><rect x=".5" y=".5" width="15" height="15" fill="#f08a1e"/><path d="M3 12 7 6l3 4 3-5" stroke="#fff0d8" stroke-width="1.600" fill="none"/><rect x="3" y="3" width="4" height="3" fill="#fff0d8" opacity=".7"/></svg>
<div style="position:absolute;left:222px;top:126px;width:1px;height:16px;background:#b4b6cc;box-shadow:1px 0 #fff"></div>
<svg class="ic" style="left:233px;top:126px" width="16" height="16" viewBox="0 0 16 16"><circle cx="8" cy="8" r="6" fill="none" stroke="#e0642a" stroke-width="3"/><path d="M8 1v14M1 8h14" stroke="#f4c0a0" stroke-width="1.200"/></svg>
<div style="left:58px;top:148px;width:272px;height:845px;background:#fff;border:2px solid #a6a6aa;border-right:1px solid #e0e0e4;border-bottom:1px solid #dcdce0;overflow:hidden" id="tree">
<svg style="left:0;top:0" width="250" height="860" viewBox="0 0 250 860"><g stroke="#c4c4c4" stroke-width="1" stroke-dasharray="1 1" fill="none"><path d="M8 8h11" /><path d="M27 24h11" /><path d="M46 40h11" /><path d="M65 56h11" /><path d="M84 72h11" /><path d="M84 88h11" /><path d="M46 104h11" /><path d="M46 120h11" /><path d="M46 136h11" /><path d="M46 152h11" /><path d="M27 168h11" /><path d="M46 184h11" /><path d="M46 200h11" /><path d="M46 216h11" /><path d="M27 232h11" /><path d="M46 248h11" /><path d="M27 264h11" /><path d="M46 280h11" /><path d="M46 296h11" /><path d="M46 312h11" /><path d="M65 328h11" /><path d="M46 344h11" /><path d="M46 360h11" /><path d="M46 376h11" /><path d="M27 392h11" /><path d="M46 408h11" /><path d="M65 424h11" /><path d="M84 440h11" /><path d="M84 456h11" /><path d="M84 472h11" /><path d="M84 488h11" /><path d="M84 504h11" /><path d="M84 520h11" /><path d="M84 536h11" /><path d="M84 552h11" /><path d="M84 568h11" /><path d="M84 584h11" /><path d="M84 600h11" /><path d="M84 616h11" /><path d="M84 632h11" /><path d="M84 648h11" /><path d="M46 664h11" /><path d="M46 680h11" /><path d="M65 696h11" /><path d="M84 712h11" /><path d="M84 728h11" /><path d="M84 744h11" /><path d="M46 760h11" /><path d="M46 776h11" /><path d="M46 792h11" /><path d="M65 808h11" /><path d="M46 824h11" /><path d="M46 840h11" /><path d="M27 16V24"/><path d="M27 24V392"/><path d="M46 32V40"/><path d="M46 40V152"/><path d="M65 48V56"/><path d="M84 64V72"/><path d="M84 72V88"/><path d="M84 80V88"/><path d="M46 96V104"/><path d="M46 104V152"/><path d="M46 112V120"/><path d="M46 120V152"/><path d="M46 128V136"/><path d="M46 136V152"/><path d="M46 144V152"/><path d="M27 160V168"/><path d="M27 168V392"/><path d="M46 176V184"/><path d="M46 184V216"/><path d="M46 192V200"/><path d="M46 200V216"/><path d="M46 208V216"/><path d="M27 224V232"/><path d="M27 232V392"/><path d="M46 240V248"/><path d="M27 256V264"/><path d="M27 264V392"/><path d="M46 272V280"/><path d="M46 280V376"/><path d="M46 288V296"/><path d="M46 296V376"/><path d="M46 304V312"/><path d="M46 312V376"/><path d="M65 320V328"/><path d="M46 336V344"/><path d="M46 344V376"/><path d="M46 352V360"/><path d="M46 360V376"/><path d="M46 368V376"/><path d="M27 384V392"/><path d="M46 400V408"/><path d="M46 408V840"/><path d="M65 416V424"/><path d="M84 432V440"/><path d="M84 440V648"/><path d="M84 448V456"/><path d="M84 456V648"/><path d="M84 464V472"/><path d="M84 472V648"/><path d="M84 480V488"/><path d="M84 488V648"/><path d="M84 496V504"/><path d="M84 504V648"/><path d="M84 512V520"/><path d="M84 520V648"/><path d="M84 528V536"/><path d="M84 536V648"/><path d="M84 544V552"/><path d="M84 552V648"/><path d="M84 560V568"/><path d="M84 568V648"/><path d="M84 576V584"/><path d="M84 584V648"/><path d="M84 592V600"/><path d="M84 600V648"/><path d="M84 608V616"/><path d="M84 616V648"/><path d="M84 624V632"/><path d="M84 632V648"/><path d="M84 640V648"/><path d="M46 656V664"/><path d="M46 664V840"/><path d="M46 672V680"/><path d="M46 680V840"/><path d="M65 688V696"/><path d="M84 704V712"/><path d="M84 712V744"/><path d="M84 720V728"/><path d="M84 728V744"/><path d="M84 736V744"/><path d="M46 752V760"/><path d="M46 760V840"/><path d="M46 768V776"/><path d="M46 776V840"/><path d="M46 784V792"/><path d="M46 792V840"/><path d="M65 800V808"/><path d="M46 816V824"/><path d="M46 824V840"/><path d="M46 832V840"/></g></svg>
<div style="left:4px;top:3px;width:9px;height:9px;background:#fff;border:1px solid #868686"></div><div style="left:6px;top:7px;width:5px;height:1px;background:#333"></div>
<svg style="left:19px;top:0px" width="16" height="16" viewBox="0 0 16 16"><path d="M5 1.500h6v5l2.500 3.500H2.500L5 6.500z" fill="#27504e"/><rect x="1" y="10" width="14" height="5" fill="#1f6b63"/><rect x="6.500" y="2.500" width="3" height="3" fill="#9fd0c8"/></svg>
<div class="t" style="left:38px;top:0px;">EM.Picasso: Planar Module</div>
<div style="left:23px;top:19px;width:9px;height:9px;background:#fff;border:1px solid #868686"></div><div style="left:25px;top:23px;width:5px;height:1px;background:#333"></div>
<svg style="left:38px;top:16px" width="16" height="16" viewBox="0 0 16 16"><path d="M2 13 7 2l5 11z" fill="#d03a30"/><rect x="8" y="7" width="6.500" height="6.500" fill="#3a62c0"/><path d="M5 11 7 6.500 9 11z" fill="#fff"/></svg>
<div class="t" style="left:57px;top:16px;">Physical Structure</div>
<div style="left:42px;top:35px;width:9px;height:9px;background:#fff;border:1px solid #868686"></div><div style="left:44px;top:39px;width:5px;height:1px;background:#333"></div>
<svg style="left:57px;top:32px" width="16" height="16" viewBox="0 0 16 16"><rect x="1.500" y="3" width="8" height="10.500" rx="1" fill="#c03a2a"/><rect x="7" y="5.500" width="7.500" height="9" rx="1" fill="#e89a20"/><rect x="8.500" y="7" width="3.500" height="4" fill="#fff" opacity=".8"/></svg>
<div class="t" style="left:76px;top:32px;">PEC Traces</div>
<div style="left:61px;top:51px;width:9px;height:9px;background:#fff;border:1px solid #868686"></div><div style="left:63px;top:55px;width:5px;height:1px;background:#333"></div>
<svg style="left:76px;top:48px" width="16" height="16" viewBox="0 0 16 16"><rect x="3" y="4" width="7" height="9" rx="1.500" fill="#d2452c"/><rect x="5" y="6" width="5.500" height="7.500" rx="1" fill="#ef9a6a"/></svg>
<div class="t" style="left:95px;top:48px;font-weight:bold;">PATCH_PEC</div>
<div style="left:94px;top:66px;width:18px;height:12px;background:#f2f8ee;border:1.500px solid #66a46a;border-radius:2px"></div>
<div class="t" style="left:115px;top:64px;">ANCHOR</div>
<div style="left:94px;top:82px;width:18px;height:12px;background:#f2f8ee;border:1.500px solid #66a46a;border-radius:2px"></div>
<div class="t" style="left:115px;top:80px;">Feed</div>
<svg style="left:57px;top:96px" width="16" height="16" viewBox="0 0 16 16"><rect x="1.500" y="3" width="8" height="10.500" rx="1" fill="#2a3a66"/><rect x="7" y="5.500" width="7.500" height="9" rx="1" fill="#8a94aa"/><rect x="8.500" y="7" width="3.500" height="4" fill="#fff" opacity=".8"/></svg>
<div class="t" style="left:76px;top:96px;">Slot Traces</div>
<svg style="left:57px;top:112px" width="16" height="16" viewBox="0 0 16 16"><rect x="1.500" y="3" width="8" height="10.500" rx="1" fill="#8a3020"/><rect x="7" y="5.500" width="7.500" height="9" rx="1" fill="#c0482c"/><rect x="8.500" y="7" width="3.500" height="4" fill="#e8b090" opacity=".8"/></svg>
<div class="t" style="left:76px;top:112px;">Conductive Sheet Traces</div>
<svg style="left:57px;top:128px" width="16" height="16" viewBox="0 0 16 16"><rect x="1.500" y="3" width="8" height="10.500" rx="1" fill="#2a4a8a"/><rect x="7" y="5.500" width="7.500" height="9" rx="1" fill="#86c020"/><rect x="8.500" y="7" width="3.500" height="4" fill="#e8f080" opacity=".8"/></svg>
<div class="t" style="left:76px;top:128px;">Embedded Object Sets</div>
<svg style="left:57px;top:144px" width="16" height="16" viewBox="0 0 16 16"><rect x="2" y="5.500" width="8.500" height="8.500" fill="#fff" stroke="#b49a9a" stroke-width="1.500"/><rect x="6" y="2" width="8" height="8" fill="#fff" stroke="#b49a9a" stroke-width="1.500"/></svg>
<div class="t" style="left:76px;top:144px;">Virtual Objects</div>
<div style="left:23px;top:163px;width:9px;height:9px;background:#fff;border:1px solid #868686"></div><div style="left:25px;top:167px;width:5px;height:1px;background:#333"></div>
<svg style="left:38px;top:160px" width="16" height="16" viewBox="0 0 16 16"><rect x="2" y="5.500" width="8.500" height="8.500" fill="#fff" stroke="#3a4a7a" stroke-width="1.500"/><rect x="6" y="2" width="8" height="8" fill="#fff" stroke="#3a4a7a" stroke-width="1.500"/></svg>
<div class="t" style="left:57px;top:160px;">Computational Domain</div>
<svg style="left:57px;top:176px" width="16" height="16" viewBox="0 0 16 16"><rect x="2" y="5.500" width="8.500" height="8.500" fill="#e8ecf4" stroke="#7a86a2" stroke-width="1.500"/><rect x="6" y="2" width="8" height="8" fill="#e8ecf4" stroke="#7a86a2" stroke-width="1.500"/></svg>
<div class="t" style="left:76px;top:176px;">Virtual Domain</div>
<svg style="left:57px;top:192px" width="16" height="16" viewBox="0 0 16 16"><rect x="1.500" y="3" width="6" height="4.500" fill="#1f3a4a"/><rect x="8.500" y="3" width="6" height="4.500" fill="#2a6a7a"/><rect x="1.500" y="8.500" width="6" height="4.500" fill="#2a6a7a"/><rect x="8.500" y="8.500" width="6" height="4.500" fill="#1f3a4a"/></svg>
<div class="t" style="left:76px;top:192px;">Periodicity</div>
<svg style="left:57px;top:208px" width="16" height="16" viewBox="0 0 16 16"><path d="M2 10.500h12v3H2z" fill="#c03a2a"/><path d="M2.500 8h11v2.500h-11z" fill="#78b030"/><path d="M4 5.500h8L13.500 8h-11z" fill="#e4c040"/></svg>
<div class="t" style="left:76px;top:208px;">Layer Stackup</div>
<div style="left:23px;top:227px;width:9px;height:9px;background:#fff;border:1px solid #868686"></div><div style="left:25px;top:231px;width:5px;height:1px;background:#333"></div>
<svg style="left:38px;top:224px" width="16" height="16" viewBox="0 0 16 16"><rect x="1" y="1.500" width="14" height="13" fill="#a9d0e8"/><rect x="1" y="1.500" width="14" height="3" fill="#2a86a8"/></svg>
<div class="t" style="left:57px;top:224px;">Discretization</div>
<svg style="left:57px;top:240px" width="16" height="16" viewBox="0 0 16 16"><rect x="2.500" y="3" width="11" height="11" fill="#a9d0e8"/><rect x="2.500" y="3" width="11" height="2.500" fill="#5aa6c4"/></svg>
<div class="t" style="left:76px;top:240px;">Planar Mesh</div>
<div style="left:23px;top:259px;width:9px;height:9px;background:#fff;border:1px solid #868686"></div><div style="left:25px;top:263px;width:5px;height:1px;background:#333"></div>
<svg style="left:38px;top:256px" width="16" height="16" viewBox="0 0 16 16"><circle cx="8" cy="8" r="5.800" fill="#fff" stroke="#222" stroke-width="1.500"/><path d="M4 4 12 12" stroke="#d02020" stroke-width="1.800"/></svg>
<div class="t" style="left:57px;top:256px;">Sources</div>
<svg style="left:57px;top:272px" width="16" height="16" viewBox="0 0 16 16"><rect x="3" y="2" width="10" height="4.500" fill="#e8c020"/><path d="M3 7h10v7H3zM3 10.500h10M8 7v7" fill="#ddd" stroke="#666" stroke-width="1"/></svg>
<div class="t" style="left:76px;top:272px;">Strip Gap Circuits</div>
<svg style="left:57px;top:288px" width="16" height="16" viewBox="0 0 16 16"><path d="M3 7C3 2 13 2 13 7z" fill="#d02a2a"/><path d="M3 8h10v6H3zM8 8v6" fill="#ddd" stroke="#666" stroke-width="1"/></svg>
<div class="t" style="left:76px;top:288px;">Probe Gap Circuits</div>
<div style="left:42px;top:307px;width:9px;height:9px;background:#fff;border:1px solid #868686"></div><div style="left:44px;top:311px;width:5px;height:1px;background:#333"></div>
<svg style="left:57px;top:304px" width="16" height="16" viewBox="0 0 16 16"><path d="M2 8C2 1.500 14 1.500 14 8z" fill="#d02a2a"/><rect x="5.500" y="8" width="5" height="4" fill="#3a2a2a"/><rect x="4.500" y="12" width="7" height="2.500" fill="#4a5a8a"/></svg>
<div class="t" style="left:76px;top:304px;">Scattering Wave Ports</div>
<svg style="left:76px;top:320px" width="16" height="16" viewBox="0 0 16 16"><path d="M2 8C2 1.500 14 1.500 14 8z" fill="#d02a2a"/><rect x="5.500" y="8" width="5" height="4" fill="#3a2a2a"/><rect x="4.500" y="12" width="7" height="2.500" fill="#4a5a8a"/></svg>
<div class="t" style="left:95px;top:320px;">WP_1</div>
<svg style="left:57px;top:336px" width="16" height="16" viewBox="0 0 16 16"><path d="M4.500 8C4.500 4.500 11.500 4.500 11.500 8z" fill="#8a1c2a"/><rect x="7" y="8" width="2" height="5" fill="#3a2a2a"/></svg>
<div class="t" style="left:76px;top:336px;">Hertzian Short Dipoles</div>
<svg style="left:57px;top:352px" width="16" height="16" viewBox="0 0 16 16"><rect x="2" y="5.500" width="8.500" height="8.500" fill="#fff" stroke="#c040c8" stroke-width="1.500"/><rect x="6" y="2" width="8" height="8" fill="#fff" stroke="#c040c8" stroke-width="1.500"/></svg>
<div class="t" style="left:76px;top:352px;">Plane Waves</div>
<svg style="left:57px;top:368px" width="16" height="16" viewBox="0 0 16 16"><rect x="2" y="5.500" width="8.500" height="8.500" fill="#fff" stroke="#e04038" stroke-width="1.500"/><rect x="6" y="2" width="8" height="8" fill="#fff" stroke="#e04038" stroke-width="1.500"/></svg>
<div class="t" style="left:76px;top:368px;">Huygens Sources</div>
<div style="left:23px;top:387px;width:9px;height:9px;background:#fff;border:1px solid #868686"></div><div style="left:25px;top:391px;width:5px;height:1px;background:#333"></div>
<svg style="left:38px;top:384px" width="16" height="16" viewBox="0 0 16 16"><rect x="1.500" y="1.500" width="13" height="13" fill="#8ab85a"/><path d="M3 13 7 6l3 4 4-6v9z" fill="#e8e8c0"/></svg>
<div class="t" style="left:57px;top:384px;">Observables</div>
<div style="left:42px;top:403px;width:9px;height:9px;background:#fff;border:1px solid #868686"></div><div style="left:44px;top:407px;width:5px;height:1px;background:#333"></div>
<svg style="left:57px;top:400px" width="16" height="16" viewBox="0 0 16 16"><circle cx="8" cy="8.500" r="6.200" fill="#3a2a5a"/><path d="M2.500 6A6.200 6.200 0 0113.500 6L8 9z" fill="#d8d8e8"/><path d="M3 12A6.200 6.200 0 0013.800 11L8 8.500z" fill="#e8c820"/><path d="M1.800 8.500A6.200 6.200 0 003 12L8 8.500 2.200 6z" fill="#8a3ac0"/></svg>
<div class="t" style="left:76px;top:400px;">Current Distributions</div>
<div style="left:61px;top:419px;width:9px;height:9px;background:#fff;border:1px solid #868686"></div><div style="left:63px;top:423px;width:5px;height:1px;background:#333"></div>
<svg style="left:76px;top:416px" width="16" height="16" viewBox="0 0 16 16"><circle cx="8" cy="8.500" r="6.200" fill="#3a2a5a"/><path d="M2.500 6A6.200 6.200 0 0113.500 6L8 9z" fill="#d8d8e8"/><path d="M3 12A6.200 6.200 0 0013.800 11L8 8.500z" fill="#e8c820"/><path d="M1.800 8.500A6.200 6.200 0 003 12L8 8.500 2.200 6z" fill="#8a3ac0"/></svg>
<div class="t" style="left:95px;top:416px;">PATCH_PEC</div>
<svg style="left:95px;top:432px" width="16" height="16" viewBox="0 0 16 16"><path d="M1.500 4v8h12" stroke="#222" stroke-width="1.300" fill="none"/><path d="M4 11V6.500M6.500 11V8.500" stroke="#222" stroke-width="1.600"/><rect x="10" y="8" width="3.500" height="3.500" fill="#e03030"/></svg>
<div class="t" style="left:114px;top:432px;">JxMagX</div>
<svg style="left:95px;top:448px" width="16" height="16" viewBox="0 0 16 16"><path d="M1.500 4v8h12" stroke="#222" stroke-width="1.300" fill="none"/><path d="M4 11V6.500M6.500 11V8.500" stroke="#222" stroke-width="1.600"/><rect x="10" y="8" width="3.500" height="3.500" fill="#30a030"/></svg>
<div class="t" style="left:114px;top:448px;">JxMagY</div>
<svg style="left:95px;top:464px" width="16" height="16" viewBox="0 0 16 16"><path d="M1.500 4v8h12" stroke="#222" stroke-width="1.300" fill="none"/><path d="M4 11V6.500M6.500 11V8.500" stroke="#222" stroke-width="1.600"/><rect x="10" y="8" width="3.500" height="3.500" fill="#4040e0"/></svg>
<div class="t" style="left:114px;top:464px;">JxMagZ</div>
<svg style="left:95px;top:480px" width="16" height="16" viewBox="0 0 16 16"><rect x="1.500" y="3.500" width="12" height="9.500" fill="#fff" stroke="#222" stroke-width="1.300"/><path d="M4.500 12V7M7.500 12V5.500M10.500 12V8" stroke="#222" stroke-width="1.500"/></svg>
<div class="t" style="left:114px;top:480px;">JxMagTotal</div>
<svg style="left:95px;top:496px" width="16" height="16" viewBox="0 0 16 16"><path d="M1.500 4v8h12" stroke="#222" stroke-width="1.300" fill="none"/><path d="M4 11V6.500M6.500 11V8.500" stroke="#222" stroke-width="1.600"/><rect x="10" y="8" width="3.500" height="3.500" fill="#e03030"/></svg>
<div class="t" style="left:114px;top:496px;">JxPhX</div>
<svg style="left:95px;top:512px" width="16" height="16" viewBox="0 0 16 16"><path d="M1.500 4v8h12" stroke="#222" stroke-width="1.300" fill="none"/><path d="M4 11V6.500M6.500 11V8.500" stroke="#222" stroke-width="1.600"/><rect x="10" y="8" width="3.500" height="3.500" fill="#30a030"/></svg>
<div class="t" style="left:114px;top:512px;">JxPhY</div>
<svg style="left:95px;top:528px" width="16" height="16" viewBox="0 0 16 16"><path d="M1.500 4v8h12" stroke="#222" stroke-width="1.300" fill="none"/><path d="M4 11V6.500M6.500 11V8.500" stroke="#222" stroke-width="1.600"/><rect x="10" y="8" width="3.500" height="3.500" fill="#4040e0"/></svg>
<div class="t" style="left:114px;top:528px;">JxPhZ</div>
<svg style="left:95px;top:544px" width="16" height="16" viewBox="0 0 16 16"><path d="M1.500 4v8h12" stroke="#222" stroke-width="1.300" fill="none"/><path d="M4 11V6.500M6.500 11V8.500" stroke="#222" stroke-width="1.600"/><rect x="10" y="8" width="3.500" height="3.500" fill="#e03030"/></svg>
<div class="t" style="left:114px;top:544px;">MxMagX</div>
<svg style="left:95px;top:560px" width="16" height="16" viewBox="0 0 16 16"><path d="M1.500 4v8h12" stroke="#222" stroke-width="1.300" fill="none"/><path d="M4 11V6.500M6.500 11V8.500" stroke="#222" stroke-width="1.600"/><rect x="10" y="8" width="3.500" height="3.500" fill="#30a030"/></svg>
<div class="t" style="left:114px;top:560px;">MxMagY</div>
<svg style="left:95px;top:576px" width="16" height="16" viewBox="0 0 16 16"><path d="M1.500 4v8h12" stroke="#222" stroke-width="1.300" fill="none"/><path d="M4 11V6.500M6.500 11V8.500" stroke="#222" stroke-width="1.600"/><rect x="10" y="8" width="3.500" height="3.500" fill="#4040e0"/></svg>
<div class="t" style="left:114px;top:576px;">MxMagZ</div>
<svg style="left:95px;top:592px" width="16" height="16" viewBox="0 0 16 16"><rect x="1.500" y="3.500" width="12" height="9.500" fill="#fff" stroke="#222" stroke-width="1.300"/><path d="M4.500 12V7M7.500 12V5.500M10.500 12V8" stroke="#222" stroke-width="1.500"/></svg>
<div class="t" style="left:114px;top:592px;">MxMagTotal</div>
<svg style="left:95px;top:608px" width="16" height="16" viewBox="0 0 16 16"><path d="M1.500 4v8h12" stroke="#222" stroke-width="1.300" fill="none"/><path d="M4 11V6.500M6.500 11V8.500" stroke="#222" stroke-width="1.600"/><rect x="10" y="8" width="3.500" height="3.500" fill="#e03030"/></svg>
<div class="t" style="left:114px;top:608px;">MxPhX</div>
<svg style="left:95px;top:624px" width="16" height="16" viewBox="0 0 16 16"><path d="M1.500 4v8h12" stroke="#222" stroke-width="1.300" fill="none"/><path d="M4 11V6.500M6.500 11V8.500" stroke="#222" stroke-width="1.600"/><rect x="10" y="8" width="3.500" height="3.500" fill="#30a030"/></svg>
<div class="t" style="left:114px;top:624px;">MxPhY</div>
<svg style="left:95px;top:640px" width="16" height="16" viewBox="0 0 16 16"><path d="M1.500 4v8h12" stroke="#222" stroke-width="1.300" fill="none"/><path d="M4 11V6.500M6.500 11V8.500" stroke="#222" stroke-width="1.600"/><rect x="10" y="8" width="3.500" height="3.500" fill="#4040e0"/></svg>
<div class="t" style="left:114px;top:640px;">MxPhZ</div>
<svg style="left:57px;top:656px" width="16" height="16" viewBox="0 0 16 16"><path d="M3 14 12 3" stroke="#5a3ac0" stroke-width="2.200"/><path d="M7 9.500 12 3" stroke="#e0a020" stroke-width="2.200"/><circle cx="12" cy="3.500" r="2" fill="#d03a3a"/></svg>
<div class="t" style="left:76px;top:656px;">Near-Field Sensors</div>
<div style="left:42px;top:675px;width:9px;height:9px;background:#fff;border:1px solid #868686"></div><div style="left:44px;top:679px;width:5px;height:1px;background:#333"></div>
<svg style="left:57px;top:672px" width="16" height="16" viewBox="0 0 16 16"><ellipse cx="6.500" cy="9.500" rx="5" ry="4.200" fill="#f2b018" transform="rotate(-30 6.500 9.500)"/><ellipse cx="10.500" cy="6" rx="4" ry="3" fill="#f6cc48" transform="rotate(-30 10.500 6)"/><path d="M2 14 13 3" stroke="#c83a1a" stroke-width="1.300"/></svg>
<div class="t" style="left:76px;top:672px;">Far-Field Radiation Patterns</div>
<div style="left:61px;top:691px;width:9px;height:9px;background:#fff;border:1px solid #868686"></div><div style="left:63px;top:695px;width:5px;height:1px;background:#333"></div>
<svg style="left:76px;top:688px" width="16" height="16" viewBox="0 0 16 16"><ellipse cx="6.500" cy="9.500" rx="5" ry="4.200" fill="#f2b018" transform="rotate(-30 6.500 9.500)"/><ellipse cx="10.500" cy="6" rx="4" ry="3" fill="#f6cc48" transform="rotate(-30 10.500 6)"/><path d="M2 14 13 3" stroke="#c83a1a" stroke-width="1.300"/></svg>
<div class="t" style="left:95px;top:688px;">FF_1</div>
<svg style="left:95px;top:704px" width="16" height="16" viewBox="0 0 16 16"><ellipse cx="6.500" cy="9.500" rx="5" ry="4.200" fill="#f2b018" transform="rotate(-30 6.500 9.500)"/><ellipse cx="10.500" cy="6" rx="4" ry="3" fill="#f6cc48" transform="rotate(-30 10.500 6)"/><path d="M2 14 13 3" stroke="#c83a1a" stroke-width="1.300"/></svg>
<div class="t" style="left:112px;top:704px;padding:0 2px;background:#0a64d8;color:#fff;outline:1px dotted #f4b000">FF_1.3D.Theta</div>
<svg style="left:95px;top:720px" width="16" height="16" viewBox="0 0 16 16"><ellipse cx="6.500" cy="9.500" rx="5" ry="4.200" fill="#f2b018" transform="rotate(-30 6.500 9.500)"/><ellipse cx="10.500" cy="6" rx="4" ry="3" fill="#f6cc48" transform="rotate(-30 10.500 6)"/><path d="M2 14 13 3" stroke="#c83a1a" stroke-width="1.300"/></svg>
<div class="t" style="left:114px;top:720px;">FF_1.3D.Phi</div>
<svg style="left:95px;top:736px" width="16" height="16" viewBox="0 0 16 16"><ellipse cx="6.500" cy="9.500" rx="5" ry="4.200" fill="#f2b018" transform="rotate(-30 6.500 9.500)"/><ellipse cx="10.500" cy="6" rx="4" ry="3" fill="#f6cc48" transform="rotate(-30 10.500 6)"/><path d="M2 14 13 3" stroke="#c83a1a" stroke-width="1.300"/></svg>
<div class="t" style="left:114px;top:736px;">FF_1.3D.Total</div>
<svg style="left:57px;top:752px" width="16" height="16" viewBox="0 0 16 16"><circle cx="8" cy="4" r="2.500" fill="#7ab0dc"/><path d="M3 14c0-5 10-5 10 0z" fill="#9ac4e8"/><path d="M2 8.500h12" stroke="#5a90c0" stroke-width="1.200"/></svg>
<div class="t" style="left:76px;top:752px;">Radar Cross Sections</div>
<svg style="left:57px;top:768px" width="16" height="16" viewBox="0 0 16 16"><rect x="2" y="5.500" width="8.500" height="8.500" fill="#f0e4f8" stroke="#7a3ab0" stroke-width="1.500"/><rect x="6" y="2" width="8" height="8" fill="#f0e4f8" stroke="#7a3ab0" stroke-width="1.500"/></svg>
<div class="t" style="left:76px;top:768px;">Huygens Surfaces</div>
<div style="left:42px;top:787px;width:9px;height:9px;background:#fff;border:1px solid #868686"></div><div style="left:44px;top:791px;width:5px;height:1px;background:#333"></div>
<svg style="left:57px;top:784px" width="16" height="16" viewBox="0 0 16 16"><path d="M2 10 7 5l5 5" stroke="#333" stroke-width="1.200" fill="none"/><circle cx="3" cy="10" r="2.200" fill="#d02a2a"/><circle cx="7.500" cy="5" r="2.200" fill="#e0a020"/><circle cx="12.500" cy="10" r="2.200" fill="#20a030"/></svg>
<div class="t" style="left:76px;top:784px;">Port Definitions</div>
<svg style="left:76px;top:800px" width="16" height="16" viewBox="0 0 16 16"><path d="M2 10 7 5l5 5" stroke="#333" stroke-width="1.200" fill="none"/><circle cx="3" cy="10" r="2.200" fill="#d02a2a"/><circle cx="7.500" cy="5" r="2.200" fill="#e0a020"/><circle cx="12.500" cy="10" r="2.200" fill="#20a030"/></svg>
<div class="t" style="left:95px;top:800px;">PD_1</div>
<svg style="left:57px;top:816px" width="16" height="16" viewBox="0 0 16 16"><path d="M2 13 8 2l6 11z" fill="#b070d0"/><path d="M5.500 12 8 7l2.500 5z" fill="#fff"/><path d="M2 13h12" stroke="#6a2a9a" stroke-width="1.500"/></svg>
<div class="t" style="left:76px;top:816px;">Periodic Characteristics</div>
<svg style="left:57px;top:832px" width="16" height="16" viewBox="0 0 16 16"><rect x="1.500" y="2" width="13" height="12" fill="#1a1a1a"/><path d="M3 11 8 4l2.500 3 2.500-3v7z" fill="#e8c020"/></svg>
<div class="t" style="left:76px;top:832px;">Data Manager</div>
</div>
<div style="left:312px;top:150px;width:17px;height:841px;background:#ececec"></div>
<div style="left:312px;top:170px;width:14px;height:786px;background:#cdcdcd"></div>
<div style="left:331px;top:121px;width:5px;height:872px;background:#d3d5e3"></div>
<div style="left:336px;top:99px;width:4px;height:918px;background:#f5f6fd"></div>
<svg style="left:311px;top:152px" width="17" height="17" viewBox="0 0 17 17"><path d="M4.500 10.500 8.500 6.500 12.500 10.500" stroke="#555" stroke-width="1.400" fill="none"/></svg>
<svg style="left:312px;top:974px" width="17" height="17" viewBox="0 0 17 17"><path d="M4.500 6.500 8.500 10.500 12.500 6.500" stroke="#555" stroke-width="1.400" fill="none"/></svg>
<div style="left:163px;top:996px;width:110px;height:22px;background:#fff"></div>
<div class="t" style="left:60px;top:1000px;font-size:12px;color:#8a8a96">Python Interpreter</div>
<div class="t" style="left:169px;top:1000px;font-size:11.5px;color:#111">Resource Manager</div>
<div style="left:0;top:1021px;width:1920px;height:19px;background:#f0f0f0"></div>
<div class="sb" style="left:7px;color:#111">Ready</div>
<div class="sb" style="left:1188px;color:#111">Millimeters</div>
<div class="sb" style="left:1255px;color:#111">2.400 GHz</div>
<div class="sb" style="left:1342px;color:#9a9a9a">Not Meshed</div>
<div class="sb" style="left:1430px;color:#111">User</div>
<div class="sb" style="left:1478px;color:#111">X:75.0000</div>
<div class="sb" style="left:1555px;color:#111">Y:180.0000</div>
<div class="sb" style="left:1639px;color:#111">Z:0.0000</div>
<div class="sb" style="left:1728px;color:#111">Grid Snap:&nbsp; 5</div>
<div class="sb" style="left:1819px;color:#111">Obj. Snap: ON</div>
<div style="left:1250px;top:1024px;width:1px;height:14px;background:#d4d4d4"></div>
<div style="left:1320px;top:1024px;width:1px;height:14px;background:#d4d4d4"></div>
<div style="left:1418px;top:1024px;width:1px;height:14px;background:#d4d4d4"></div>
<div style="left:1466px;top:1024px;width:1px;height:14px;background:#d4d4d4"></div>
<div style="left:1716px;top:1024px;width:1px;height:14px;background:#d4d4d4"></div>
<div style="left:1810px;top:1024px;width:1px;height:14px;background:#d4d4d4"></div>
<div style="left:340px;top:99px;width:1550px;height:918px;background:#2b2b2b;overflow:hidden">
<svg style="left:0;top:0" width="1550" height="918" viewBox="141.667 41.250 645.833 382.500"><defs><filter id="b5" x="-20%" y="-20%" width="140%" height="140%"><feGaussianBlur stdDeviation="5"/></filter><filter id="b2" x="-10%" y="-10%" width="120%" height="120%"><feGaussianBlur stdDeviation="2"/></filter><filter id="b7" x="-20%" y="-20%" width="140%" height="140%"><feGaussianBlur stdDeviation="7"/></filter><filter id="b3" x="-20%" y="-20%" width="140%" height="140%"><feGaussianBlur stdDeviation="3.2"/></filter><clipPath id="co"><path d="M356.0 57.0C364.3 56.6 360.3 56.7 370.0 57.5C379.7 58.3 375.0 57.2 385.0 59.5C395.0 61.8 388.8 60.0 400.0 64.5C411.2 69.0 405.8 65.2 418.5 73.0C431.2 80.8 425.7 77.2 438.0 88.0C450.3 98.8 445.7 94.4 455.4 105.4C465.1 116.4 460.1 110.2 467.0 121.0C473.9 131.8 471.3 127.0 476.0 137.7C480.7 148.4 478.7 142.2 481.0 153.0C483.3 163.8 482.2 159.0 483.0 170.0C483.8 181.0 483.7 176.0 483.5 186.0C483.3 196.0 483.1 192.3 482.5 200.0C481.9 207.7 483.0 202.0 481.8 209.0C480.5 216.0 482.0 214.0 478.8 221.0C475.5 228.0 478.2 224.2 472.0 230.0C465.8 235.8 468.0 234.0 460.0 238.2C452.0 242.5 456.5 240.2 448.0 242.8C439.5 245.2 443.5 244.4 434.5 245.8C425.5 247.1 429.5 246.7 421.0 246.8C412.5 247.0 417.5 247.5 409.0 246.2C400.5 244.8 403.0 245.7 395.5 242.8C388.0 239.8 391.2 241.8 386.5 237.5C381.8 233.2 383.4 235.4 381.2 230.0C379.1 224.6 384.3 222.8 380.2 221.2C376.1 219.6 375.5 223.4 368.8 225.3C362.1 227.2 365.6 226.2 360.0 227.0C354.4 227.8 358.3 227.7 352.0 227.8C345.7 227.9 347.8 228.0 341.0 227.2C334.2 226.4 338.2 227.6 331.5 225.5C324.8 223.4 327.5 224.5 321.0 221.0C314.5 217.5 318.0 219.5 312.0 215.0C306.0 210.5 308.5 213.0 303.0 207.5C297.5 202.0 299.5 206.0 295.5 198.5C291.5 191.0 293.1 193.8 291.0 185.0C288.9 176.2 290.1 182.0 289.3 172.0C288.5 162.0 288.6 165.0 288.7 155.0C288.8 145.0 288.4 151.0 289.5 142.0C290.6 133.0 289.9 138.0 292.0 128.0C294.1 118.0 293.1 121.0 295.8 112.0C298.5 103.0 296.6 108.5 300.0 101.0C303.4 93.5 301.7 96.3 306.0 89.5C310.3 82.7 308.5 85.8 313.0 80.5C317.5 75.2 314.8 78.1 319.5 73.7C324.2 69.3 321.8 71.0 327.0 67.3C332.2 63.6 329.0 65.3 335.0 62.5C341.0 59.7 338.0 60.6 345.0 58.8C352.0 57.0 347.7 57.4 356.0 57.0Z"/></clipPath><clipPath id="cl"><path d="M391.0 63.0L388.5 80.0L387.0 100.0L386.6 130.0L386.6 150.0L386.6 165.0L384.5 180.0L382.8 191.0L381.0 205.0L380.3 211.0L379.5 221.5L379.5 245.0L270.0 245.0L270.0 40.0L391.0 40.0Z"/></clipPath><radialGradient id="gl" gradientUnits="userSpaceOnUse" cx="372" cy="400" r="345">
<stop offset=".66" stop-color="#10bc18"/><stop offset=".72" stop-color="#20c40c"/><stop offset=".775" stop-color="#54cc04"/><stop offset=".82" stop-color="#a0d800"/><stop offset=".862" stop-color="#e4e400"/>
<stop offset=".895" stop-color="#f4b000"/><stop offset=".93" stop-color="#f87800"/><stop offset=".965" stop-color="#fa3c00"/><stop offset="1" stop-color="#fc2000"/></radialGradient></defs><g fill="none" stroke-linejoin="miter"><path d="M209.5 241.7 334.4 133.3 649.3 219.2 520.3 331.2Z" stroke="#94601a" stroke-width="3"/><path d="M209.5 241.2 334.4 132.8 649.3 218.7 520.3 330.7Z" stroke="#c4862a" stroke-width="1.4"/></g><g stroke="#503c20" stroke-width=".5"><path d="M209.6 243V277.5M520.5 333V367.500M649.8 221V255"/></g><path d="M592.4 41 476 142" stroke="#22c822" stroke-width="1.05"/><path d="M400 223.700 788 335.5" stroke="#e21212" stroke-width="1.150"/><path d="M318.6 224.6 360 190 440 214 409.750 246.5 404.8 250.3Z" fill="#b23c3c"/><path d="M440 228.700 518.750 251.2 513.8 256.450 436 234Z" fill="#b23c3c"/><g clip-path="url(#co)"><g filter="url(#b2)"><rect x="200" y="-20" width="380" height="360" fill="#fc2800"/><path d="M372.0 52.8C377.3 56.4 377.3 56.7 388.0 63.8C398.7 70.8 393.3 68.5 404.0 74.0C414.7 79.5 404.7 76.0 420.0 80.2C435.3 84.3 431.7 77.7 450.0 86.3C468.3 95.0 458.3 94.6 475.0 106.0C491.7 117.4 491.7 115.7 500.0 120.5L500 262L372 262Z" fill="#fc3600"/><path d="M372.0 56.1C377.3 60.0 377.3 60.2 388.0 67.9C398.7 75.5 393.3 72.8 404.0 79.0C414.7 85.2 404.7 80.9 420.0 86.3C435.3 91.7 431.7 86.6 450.0 95.2C468.3 103.7 458.3 102.3 475.0 112.0C491.7 121.7 491.7 120.2 500.0 124.2L500 262L372 262Z" fill="#fa5000"/><path d="M372.0 59.5C377.3 63.7 377.3 63.8 388.0 72.0C398.7 80.2 393.3 77.2 404.0 84.0C414.7 90.8 404.7 85.8 420.0 92.5C435.3 99.2 431.7 95.5 450.0 104.0C468.3 112.5 458.3 110.0 475.0 118.0C491.7 126.0 491.7 124.7 500.0 128.0L500 262L372 262Z" fill="#fa6c00"/><path d="M372.0 62.9C377.3 67.3 377.3 67.4 388.0 76.1C398.7 84.8 393.3 81.5 404.0 89.0C414.7 96.5 404.7 90.7 420.0 98.7C435.3 106.6 431.7 104.4 450.0 112.8C468.3 121.3 458.3 117.7 475.0 124.0C491.7 130.3 491.7 129.2 500.0 131.8L500 262L372 262Z" fill="#f88600"/><path d="M372.0 66.2C377.3 70.9 377.3 71.0 388.0 80.2C398.7 89.5 393.3 85.8 404.0 94.0C414.7 102.2 404.7 95.6 420.0 104.8C435.3 114.1 431.7 113.3 450.0 121.7C468.3 130.0 458.3 125.4 475.0 130.0C491.7 134.6 491.7 133.7 500.0 135.5L500 262L372 262Z" fill="#f69e00"/><path d="M372.0 69.6C377.3 74.5 377.3 74.6 388.0 84.4C398.7 94.2 393.3 90.1 404.0 99.0C414.7 107.9 404.7 100.5 420.0 111.0C435.3 121.5 431.7 122.2 450.0 130.5C468.3 138.8 458.3 133.1 475.0 136.0C491.7 138.9 491.7 138.2 500.0 139.2L500 262L372 262Z" fill="#f1b200"/><path d="M372.0 73.0C377.3 78.2 377.3 78.2 388.0 88.5C398.7 98.8 393.3 94.4 404.0 104.0C414.7 113.6 404.7 105.4 420.0 117.2C435.3 129.0 431.7 131.0 450.0 139.3C468.3 147.6 458.3 140.8 475.0 142.0C491.7 143.2 491.7 142.7 500.0 143.0L500 262L372 262Z" fill="#edc600"/><path d="M372.0 75.0C377.3 80.6 377.3 80.6 388.0 91.7C398.7 102.9 393.3 98.2 404.0 108.5C414.7 118.7 404.7 110.2 420.0 122.4C435.3 134.6 431.7 136.7 450.0 145.0C468.3 153.3 458.3 146.2 475.0 147.2C491.7 148.3 491.7 147.9 500.0 148.2L500 262L372 262Z" fill="#e8da00"/><path d="M372.0 77.0C377.3 83.0 377.3 83.0 388.0 95.0C398.7 106.9 393.3 102.1 404.0 113.0C414.7 123.8 404.7 115.0 420.0 127.6C435.3 140.2 431.7 142.3 450.0 150.7C468.3 159.0 458.3 151.6 475.0 152.5C491.7 153.4 491.7 153.2 500.0 153.5L500 262L372 262Z" fill="#dce200"/><path d="M372.0 79.0C377.3 85.4 377.3 85.4 388.0 98.2C398.7 111.0 393.3 105.9 404.0 117.4C414.7 129.0 404.7 119.8 420.0 132.8C435.3 145.8 431.7 148.0 450.0 156.3C468.3 164.6 458.3 156.9 475.0 157.8C491.7 158.6 491.7 158.4 500.0 158.8L500 262L372 262Z" fill="#c9e000"/><path d="M372.0 81.0C377.3 87.8 377.3 87.8 388.0 101.4C398.7 115.0 393.3 109.7 404.0 121.9C414.7 134.1 404.7 124.6 420.0 138.0C435.3 151.4 431.7 153.7 450.0 162.0C468.3 170.3 458.3 162.3 475.0 163.0C491.7 163.7 491.7 163.7 500.0 164.0L500 262L372 262Z" fill="#b5dc00"/><path d="M372.0 82.2C377.3 89.5 377.3 89.4 388.0 104.1C398.7 118.7 393.3 113.3 404.0 126.2C414.7 139.1 404.7 129.0 420.0 142.8C435.3 156.5 431.7 158.7 450.0 167.4C468.3 176.1 458.3 168.0 475.0 168.9C491.7 169.8 491.7 169.6 500.0 170.0L500 262L372 262Z" fill="#a2da00"/><path d="M372.0 83.5C377.3 91.2 377.3 91.1 388.0 106.7C398.7 122.3 393.3 116.8 404.0 130.4C414.7 144.0 404.7 133.4 420.0 147.5C435.3 161.6 431.7 163.7 450.0 172.8C468.3 181.8 458.3 173.7 475.0 174.8C491.7 175.8 491.7 175.6 500.0 176.0L500 262L372 262Z" fill="#8ed600"/><path d="M372.0 84.8C377.3 93.0 377.3 92.7 388.0 109.3C398.7 126.0 393.3 120.4 404.0 134.7C414.7 149.0 404.7 137.8 420.0 152.2C435.3 166.7 431.7 168.7 450.0 178.1C468.3 187.6 458.3 179.3 475.0 180.6C491.7 181.9 491.7 181.5 500.0 182.0L500 262L372 262Z" fill="#78d200"/><path d="M372.0 86.0C377.3 94.7 377.3 94.3 388.0 112.0C398.7 129.7 393.3 124.0 404.0 139.0C414.7 154.0 404.7 142.2 420.0 157.0C435.3 171.8 431.7 173.7 450.0 183.5C468.3 193.3 458.3 185.0 475.0 186.5C491.7 188.0 491.7 187.5 500.0 188.0L500 262L372 262Z" fill="#64ce00"/><path d="M372.0 88.5C377.3 97.7 377.3 97.4 388.0 116.0C398.7 134.6 393.3 128.6 404.0 144.2C414.7 159.9 404.7 147.8 420.0 162.9C435.3 178.0 431.7 179.5 450.0 189.6C468.3 199.7 458.3 191.5 475.0 193.2C491.7 195.0 491.7 194.4 500.0 195.0L500 262L372 262Z" fill="#4eca00"/><path d="M372.0 91.0C377.3 100.7 377.3 100.5 388.0 120.0C398.7 139.5 393.3 133.2 404.0 149.5C414.7 165.8 404.7 153.4 420.0 168.8C435.3 184.2 431.7 185.3 450.0 195.8C468.3 206.2 458.3 197.9 475.0 200.0C491.7 202.1 491.7 201.3 500.0 202.0L500 262L372 262Z" fill="#3ec802"/><path d="M372.0 93.5C377.3 103.7 377.3 103.6 388.0 124.0C398.7 144.4 393.3 137.8 404.0 154.8C414.7 171.7 404.7 159.0 420.0 174.7C435.3 190.4 431.7 191.2 450.0 201.9C468.3 212.6 458.3 204.4 475.0 206.8C491.7 209.1 491.7 208.2 500.0 209.0L500 262L372 262Z" fill="#33c604"/><path d="M372.0 96.0C377.3 106.7 377.3 106.7 388.0 128.0C398.7 149.3 393.3 142.5 404.0 160.0C414.7 177.5 404.7 164.6 420.0 180.6C435.3 196.6 431.7 197.0 450.0 208.0C468.3 219.0 458.3 210.8 475.0 213.5C491.7 216.2 491.7 215.2 500.0 216.0L500 262L372 262Z" fill="#27c608"/><path d="M372.0 98.5C377.3 109.7 377.3 109.8 388.0 132.0C398.7 154.2 393.3 147.1 404.0 165.2C414.7 183.4 404.7 170.2 420.0 186.5C435.3 202.8 431.7 202.9 450.0 214.1C468.3 225.4 458.3 217.3 475.0 220.2C491.7 223.2 491.7 222.1 500.0 223.0L500 262L372 262Z" fill="#1cc40a"/><path d="M372.0 101.0C377.3 112.7 377.3 112.8 388.0 136.0C398.7 159.2 393.3 151.7 404.0 170.5C414.7 189.3 404.7 175.8 420.0 192.4C435.3 209.0 431.7 208.7 450.0 220.2C468.3 231.8 458.3 223.8 475.0 227.0C491.7 230.2 491.7 229.0 500.0 230.0L500 262L372 262Z" fill="#16c40c"/></g><g filter="url(#b7)"><path d="M376.0 140.0L396.0 150.0L408.0 190.0L422.0 225.0L446.0 256.0L376.0 256.0Z" fill="#0cbc34"/><path d="M436.0 214.0L462.0 192.0L492.0 188.0L492.0 226.0L470.0 244.0L446.0 246.0Z" fill="#4ccc04"/><path d="M396.0 178.0L420.0 186.0L444.0 214.0L452.0 240.0L430.0 236.0L410.0 212.0Z" fill="#10be14"/></g><g filter="url(#b3)"><path d="M380.0 140.0L391.0 146.0L394.0 180.0L398.0 205.0L408.0 228.0L424.0 252.0L376.0 252.0Z" fill="#00b468"/><path d="M378.0 165.0L388.0 172.0L389.0 205.0L394.0 226.0L405.0 248.0L376.0 250.0Z" fill="#009aa8"/><path d="M376.0 198.0L383.0 203.0L384.5 222.0L391.0 241.0L376.0 246.0Z" fill="#0c38a4"/></g><g clip-path="url(#cl)"><g filter="url(#b2)"><rect x="200" y="-20" width="380" height="360" fill="#fc2400"/><path d="M268.0 85.0C272.7 82.7 274.0 81.0 282.0 78.0C290.0 75.0 286.0 77.3 292.0 76.0C298.0 74.7 286.7 77.7 300.0 74.0C313.3 70.3 312.3 68.6 332.0 65.0C351.7 61.4 344.7 63.7 359.0 63.2C373.3 62.8 365.3 63.0 375.0 63.8C384.7 64.5 380.3 64.8 388.0 65.5C395.7 66.2 394.7 65.8 398.0 66.0L398 262L268 262Z" fill="#fc3100"/><path d="M268.0 91.5C272.7 89.0 274.0 87.5 282.0 84.0C290.0 80.5 286.0 82.8 292.0 81.0C298.0 79.2 286.7 82.3 300.0 78.5C313.3 74.7 312.3 73.2 332.0 69.5C351.7 65.8 344.7 68.0 359.0 67.4C373.3 66.8 365.3 67.2 375.0 67.6C384.7 68.1 380.3 68.3 388.0 68.8C395.7 69.2 394.7 68.9 398.0 69.0L398 262L268 262Z" fill="#fa4b00"/><path d="M268.0 98.0C272.7 95.3 274.0 94.0 282.0 90.0C290.0 86.0 286.0 88.3 292.0 86.0C298.0 83.7 286.7 87.0 300.0 83.0C313.3 79.0 312.3 77.8 332.0 74.0C351.7 70.2 344.7 72.3 359.0 71.5C373.3 70.7 365.3 71.3 375.0 71.5C384.7 71.7 380.3 71.8 388.0 72.0C395.7 72.2 394.7 72.0 398.0 72.0L398 262L268 262Z" fill="#fa6500"/><path d="M268.0 104.5C272.7 101.7 274.0 100.5 282.0 96.0C290.0 91.5 286.0 93.8 292.0 91.0C298.0 88.2 286.7 91.7 300.0 87.5C313.3 83.3 312.3 82.5 332.0 78.5C351.7 74.5 344.7 76.7 359.0 75.6C373.3 74.6 365.3 75.5 375.0 75.4C384.7 75.2 380.3 75.4 388.0 75.2C395.7 75.1 394.7 75.1 398.0 75.0L398 262L268 262Z" fill="#f87f00"/><path d="M268.0 111.0C272.7 108.0 274.0 107.0 282.0 102.0C290.0 97.0 286.0 99.3 292.0 96.0C298.0 92.7 286.7 96.3 300.0 92.0C313.3 87.7 312.3 87.1 332.0 83.0C351.7 78.9 344.7 81.0 359.0 79.8C373.3 78.5 365.3 79.7 375.0 79.2C384.7 78.8 380.3 78.9 388.0 78.5C395.7 78.1 394.7 78.2 398.0 78.0L398 262L268 262Z" fill="#f69700"/><path d="M268.0 117.5C272.7 114.3 274.0 113.5 282.0 108.0C290.0 102.5 286.0 104.8 292.0 101.0C298.0 97.2 286.7 101.0 300.0 96.5C313.3 92.0 312.3 91.7 332.0 87.5C351.7 83.3 344.7 85.3 359.0 83.9C373.3 82.4 365.3 83.8 375.0 83.1C384.7 82.4 380.3 82.5 388.0 81.8C395.7 81.0 394.7 81.2 398.0 81.0L398 262L268 262Z" fill="#f1ad00"/><path d="M268.0 124.0C272.7 120.7 274.0 120.0 282.0 114.0C290.0 108.0 286.0 110.3 292.0 106.0C298.0 101.7 286.7 105.7 300.0 101.0C313.3 96.3 312.3 96.3 332.0 92.0C351.7 87.7 344.7 89.7 359.0 88.0C373.3 86.3 365.3 88.0 375.0 87.0C384.7 86.0 380.3 86.0 388.0 85.0C395.7 84.0 394.7 84.3 398.0 84.0L398 262L268 262Z" fill="#edc300"/><path d="M268.0 127.5C272.7 124.2 274.0 123.5 282.0 117.5C290.0 111.5 286.0 113.9 292.0 109.6C298.0 105.3 286.7 109.1 300.0 104.6C313.3 100.1 312.3 100.4 332.0 96.1C351.7 91.8 344.7 93.7 359.0 91.8C373.3 89.8 365.3 91.5 375.0 90.2C384.7 89.0 380.3 89.1 388.0 88.0C395.7 86.9 394.7 87.3 398.0 87.0L398 262L268 262Z" fill="#e8d900"/><path d="M268.0 131.0C272.7 127.7 274.0 126.9 282.0 121.0C290.0 115.1 286.0 117.5 292.0 113.2C298.0 109.0 286.7 112.6 300.0 108.2C313.3 103.9 312.3 104.5 332.0 100.2C351.7 96.0 344.7 97.7 359.0 95.5C373.3 93.3 365.3 95.0 375.0 93.5C384.7 92.0 380.3 92.2 388.0 91.0C395.7 89.8 394.7 90.3 398.0 90.0L398 262L268 262Z" fill="#dce200"/><path d="M268.0 134.5C272.7 131.2 274.0 130.4 282.0 124.5C290.0 118.6 286.0 121.1 292.0 116.9C298.0 112.7 286.7 116.1 300.0 111.9C313.3 107.7 312.3 108.5 332.0 104.3C351.7 100.1 344.7 101.8 359.0 99.2C373.3 96.7 365.3 98.5 375.0 96.8C384.7 95.0 380.3 95.2 388.0 94.0C395.7 92.8 394.7 93.3 398.0 93.0L398 262L268 262Z" fill="#c7e000"/><path d="M268.0 138.0C272.7 134.7 274.0 133.8 282.0 128.0C290.0 122.2 286.0 124.7 292.0 120.5C298.0 116.3 286.7 119.5 300.0 115.5C313.3 111.5 312.3 112.6 332.0 108.4C351.7 104.2 344.7 105.8 359.0 103.0C373.3 100.2 365.3 102.0 375.0 100.0C384.7 98.0 380.3 98.3 388.0 97.0C395.7 95.7 394.7 96.3 398.0 96.0L398 262L268 262Z" fill="#b3dc00"/><path d="M268.0 144.0C272.7 140.3 274.0 139.4 282.0 133.0C290.0 126.6 286.0 129.4 292.0 124.9C298.0 120.3 286.7 123.7 300.0 119.4C313.3 115.0 312.3 116.1 332.0 111.8C351.7 107.5 344.7 109.2 359.0 106.4C373.3 103.5 365.3 105.4 375.0 103.2C384.7 101.1 380.3 101.4 388.0 100.0C395.7 98.6 394.7 99.3 398.0 99.0L398 262L268 262Z" fill="#9eda00"/><path d="M268.0 150.0C272.7 146.0 274.0 144.9 282.0 138.0C290.0 131.1 286.0 134.2 292.0 129.2C298.0 124.3 286.7 127.9 300.0 123.2C313.3 118.6 312.3 119.7 332.0 115.2C351.7 110.7 344.7 112.7 359.0 109.8C373.3 106.8 365.3 108.8 375.0 106.5C384.7 104.2 380.3 104.5 388.0 103.0C395.7 101.5 394.7 102.3 398.0 102.0L398 262L268 262Z" fill="#86d601"/><path d="M268.0 156.0C272.7 151.7 274.0 150.5 282.0 143.0C290.0 135.5 286.0 138.9 292.0 133.6C298.0 128.3 286.7 132.1 300.0 127.1C313.3 122.1 312.3 123.3 332.0 118.6C351.7 113.9 344.7 116.1 359.0 113.1C373.3 110.2 365.3 112.1 375.0 109.8C384.7 107.4 380.3 107.6 388.0 106.0C395.7 104.4 394.7 105.3 398.0 105.0L398 262L268 262Z" fill="#6ad003"/><path d="M268.0 162.0C272.7 157.3 274.0 156.0 282.0 148.0C290.0 140.0 286.0 143.7 292.0 138.0C298.0 132.3 286.7 136.3 300.0 131.0C313.3 125.7 312.3 126.8 332.0 122.0C351.7 117.2 344.7 119.5 359.0 116.5C373.3 113.5 365.3 115.5 375.0 113.0C384.7 110.5 380.3 110.7 388.0 109.0C395.7 107.3 394.7 108.3 398.0 108.0L398 262L268 262Z" fill="#4ecc05"/><path d="M268.0 171.5C272.7 166.5 274.0 165.1 282.0 156.5C290.0 147.9 286.0 151.8 292.0 145.8C298.0 139.7 286.7 144.2 300.0 138.2C313.3 132.3 312.3 133.4 332.0 128.0C351.7 122.6 344.7 125.3 359.0 122.1C373.3 119.0 365.3 121.0 375.0 118.5C384.7 116.0 380.3 116.2 388.0 114.5C395.7 112.8 394.7 113.8 398.0 113.5L398 262L268 262Z" fill="#32c607"/><path d="M268.0 181.0C272.7 175.7 274.0 174.2 282.0 165.0C290.0 155.8 286.0 160.0 292.0 153.5C298.0 147.0 286.7 152.0 300.0 145.5C313.3 139.0 312.3 139.9 332.0 134.0C351.7 128.1 344.7 131.1 359.0 127.8C373.3 124.4 365.3 126.6 375.0 124.0C384.7 121.4 380.3 121.7 388.0 120.0C395.7 118.3 394.7 119.3 398.0 119.0L398 262L268 262Z" fill="#22c30a"/><path d="M268.0 190.5C272.7 184.8 274.0 183.2 282.0 173.5C290.0 163.8 286.0 168.2 292.0 161.2C298.0 154.3 286.7 159.8 300.0 152.8C313.3 145.7 312.3 146.5 332.0 140.0C351.7 133.5 344.7 136.9 359.0 133.4C373.3 129.9 365.3 132.1 375.0 129.5C384.7 126.9 380.3 127.2 388.0 125.5C395.7 123.8 394.7 124.8 398.0 124.5L398 262L268 262Z" fill="#1cc110"/><path d="M268.0 200.0C272.7 194.0 274.0 192.3 282.0 182.0C290.0 171.7 286.0 176.3 292.0 169.0C298.0 161.7 286.7 167.7 300.0 160.0C313.3 152.3 312.3 153.0 332.0 146.0C351.7 139.0 344.7 142.7 359.0 139.0C373.3 135.3 365.3 137.7 375.0 135.0C384.7 132.3 380.3 132.7 388.0 131.0C395.7 129.3 394.7 130.3 398.0 130.0L398 262L268 262Z" fill="#18bf14"/><path d="M268.0 209.5C272.7 203.2 274.0 201.4 282.0 190.5C290.0 179.6 286.0 184.5 292.0 176.8C298.0 169.0 286.7 175.5 300.0 167.2C313.3 159.0 312.3 159.5 332.0 152.0C351.7 144.5 344.7 148.5 359.0 144.6C373.3 140.8 365.3 143.2 375.0 140.5C384.7 137.8 380.3 138.2 388.0 136.5C395.7 134.8 394.7 135.8 398.0 135.5L398 262L268 262Z" fill="#12bd1a"/><path d="M268.0 219.0C272.7 212.3 274.0 210.5 282.0 199.0C290.0 187.5 286.0 192.7 292.0 184.5C298.0 176.3 286.7 183.3 300.0 174.5C313.3 165.7 312.3 166.1 332.0 158.0C351.7 149.9 344.7 154.2 359.0 150.2C373.3 146.2 365.3 148.8 375.0 146.0C384.7 143.2 380.3 143.7 388.0 142.0C395.7 140.3 394.7 141.3 398.0 141.0L398 262L268 262Z" fill="#10bc1c"/></g><g filter="url(#b5)"><path d="M392.0 146.0L380.0 152.0L348.0 172.0L310.0 196.0L290.0 215.0L296.0 240.0L392.0 240.0Z" fill="#08b844"/><path d="M392.0 154.0L383.0 160.0L356.0 180.0L322.0 204.0L300.0 235.0L392.0 240.0Z" fill="#00a890"/></g><g filter="url(#b3)"><path d="M392.0 166.0L384.0 172.0L368.0 190.0L348.0 212.0L336.0 235.0L392.0 240.0Z" fill="#0468ac"/><path d="M392.0 180.0L383.0 186.0L371.0 202.0L358.0 218.0L352.0 235.0L392.0 240.0Z" fill="#10148c"/></g></g></g></svg>
<div class="t" style="left:2px;top:2px;width:91px;height:17px;background:#000080;color:#c6c6ee;font-size:14.8px;line-height:17px;padding-left:1px">Perspective</div>
<div style="left:1402px;top:12px;width:139px;height:272px;background:#f0f0f0;border:1px solid #fff;box-shadow:0 0 0 1px #9a9a9a"></div>
<div style="left:1403px;top:13px;width:137px;height:23px;border:1.500px solid #767676;border-right-color:#fff;border-bottom-color:#fff;background:#f2f2f2"></div>
<div style="left:1403px;top:38px;width:137px;height:24px;border:1.500px solid #767676;border-right-color:#fff;border-bottom-color:#fff;background:#f2f2f2"></div>
<div style="left:1403px;top:64px;width:137px;height:194px;border:1.500px solid #767676;border-right-color:#fff;border-bottom-color:#fff;background:#f2f2f2"></div>
<div style="left:1403px;top:260px;width:137px;height:22px;border:1.500px solid #767676;border-right-color:#fff;border-bottom-color:#fff;background:#f2f2f2"></div>
<div class="t" style="left:1416px;top:16px;font-size:14px;letter-spacing:.45px;color:#222">FF_1</div>
<div class="t" style="left:1416px;top:42px;font-size:14px;letter-spacing:.45px;color:#222">Type: Linear</div>
<div class="t" style="left:1416px;top:263px;font-size:14px;letter-spacing:.45px;color:#222">Dir: 5.161</div>
<div style="left:1416px;top:74px;width:22px;height:170px;background:linear-gradient(#ff2000 0%,#f85000 8%,#f4a000 17%,#dcdc00 27%,#78d000 36%,#18c408 46%,#08b840 56%,#00a0a0 66%,#0060b0 75%,#1020a0 84%,#28108c 92%,#500078 100%)"></div>
<div class="t" style="left:1448px;top:68.4px;font-size:14px;color:#222">1</div>
<div class="t" style="left:1448px;top:85.3px;font-size:14px;color:#222">0.9</div>
<div class="t" style="left:1448px;top:102.2px;font-size:14px;color:#222">0.8</div>
<div class="t" style="left:1448px;top:119.2px;font-size:14px;color:#222">0.7</div>
<div class="t" style="left:1448px;top:136.1px;font-size:14px;color:#222">0.6</div>
<div class="t" style="left:1448px;top:153.0px;font-size:14px;color:#222">0.5</div>
<div class="t" style="left:1448px;top:169.9px;font-size:14px;color:#222">0.4</div>
<div class="t" style="left:1448px;top:186.8px;font-size:14px;color:#222">0.3</div>
<div class="t" style="left:1448px;top:203.8px;font-size:14px;color:#222">0.2</div>
<div class="t" style="left:1448px;top:220.7px;font-size:14px;color:#222">0.1</div>
<div class="t" style="left:1448px;top:237.6px;font-size:14px;color:#222">0</div>
</div>
<div style="left:1890px;top:99px;width:4px;height:918px;background:#f6f7fd"></div>
<div class="tb" style="left:1895px;top:123px;width:25px;height:333px;background:linear-gradient(90deg,#eef0fb 0%,#dcdef0 45%,#b2b4ce 100%)"></div>
<div class="griph" style="left:1899px;top:127px;width:16px"></div>
<svg class="ic" style="left:1899px;top:135px" width="16" height="16" viewBox="0 0 16 16"><rect x=".5" y="2.500" width="15" height="11" fill="#1b7396"/><rect x="2.500" y="6" width="11" height="3.500" fill="#e8f2f8"/></svg>
<svg class="ic" style="left:1899px;top:158px" width="16" height="16" viewBox="0 0 16 16"><ellipse cx="8" cy="8" rx="7" ry="4" fill="#bcbcbc"/><ellipse cx="8" cy="8" rx="3.200" ry="2.200" fill="#9c9c9c"/></svg>
<svg class="ic" style="left:1899px;top:180px" width="16" height="16" viewBox="0 0 16 16"><path d="M.5 5.500 4.500 1.500h11v9.500l-4 4H.5z" fill="#1b7396"/><rect x="2" y="7" width="8" height="6.500" fill="#7fbcd8"/></svg>
<svg class="ic" style="left:1899px;top:201px" width="16" height="16" viewBox="0 0 16 16"><path d="M1.500 6.500 5 3h9.500v7L11 13.500H1.500z" fill="#eef4f8" stroke="#1b7396" stroke-width="1.500"/><path d="M1.500 6.500H11V13.500M11 6.500 14.500 3" stroke="#1b7396" stroke-width="1.300" fill="none"/></svg>
<svg class="ic" style="left:1899px;top:223px" width="16" height="16" viewBox="0 0 16 16"><rect x=".5" y=".5" width="15" height="15" fill="#1b7396"/><path d="M.5 5.500h15M.5 10.500h15M5.500 .5v15M10.500 .5v15" stroke="#cfe4ee" stroke-width="1.200"/></svg>
<svg class="ic" style="left:1899px;top:245px" width="16" height="16" viewBox="0 0 16 16"><path d="M.5 5.500 4.500 1.500h11v9.500l-4 4H.5z" fill="#3d7f9c"/><rect x="2" y="7" width="8" height="6.500" fill="#7fbcd8"/></svg>
<div style="position:absolute;left:1898px;top:268px;width:18px;height:1px;background:#b4b6cc;box-shadow:0 1px #fff"></div>
<svg class="ic" style="left:1899px;top:275px" width="16" height="16" viewBox="0 0 16 16"><text x="1" y="13" font-family="Liberation Serif,serif" font-style="italic" font-size="14" fill="#222">fx</text></svg>
<svg class="ic" style="left:1899px;top:296px" width="16" height="16" viewBox="0 0 16 16"><circle cx="6.5" cy="6.5" r="4.3" fill="#dfe6ee" stroke="#555" stroke-width="2"/><path d="M9.5 9.5 14.5 14.5" stroke="#555" stroke-width="2.6"/></svg>
<svg class="ic" style="left:1899px;top:319px" width="16" height="16" viewBox="0 0 16 16"><path d="M1.500 6.500 5 3h9.500v7L11 13.500H1.500z" fill="#eef4f8" stroke="#1b7396" stroke-width="1.500"/><path d="M1.500 6.500H11V13.500M11 6.500 14.500 3" stroke="#1b7396" stroke-width="1.300" fill="none"/></svg>
<svg class="ic" style="left:1899px;top:342px" width="16" height="16" viewBox="0 0 16 16"><path d="M3 13 10 4l2.500 2L5.500 15 2.500 15.500z" fill="#2a2a2a"/><path d="M10.500 3.500 12.500 1.500 14.500 3.500 12.800 5.500z" fill="#555"/></svg>
<svg class="ic" style="left:1899px;top:364px" width="16" height="16" viewBox="0 0 16 16"><rect x="1" y="10" width="14" height="4" fill="#1b7396"/><rect x="6" y="2" width="4" height="8" fill="#1b7396" opacity=".8"/></svg>
<svg class="ic" style="left:1899px;top:385px" width="16" height="16" viewBox="0 0 16 16"><rect x="1.500" y="1.500" width="6" height="6" fill="#1b7396"/><rect x="8.500" y="8.500" width="6" height="6" fill="#1b7396"/><rect x="8.500" y="1.500" width="6" height="6" fill="#cfe4f0" stroke="#1b7396"/><rect x="1.500" y="8.500" width="6" height="6" fill="#cfe4f0" stroke="#1b7396"/></svg>
<svg class="ic" style="left:1899px;top:407px" width="16" height="16" viewBox="0 0 16 16"><path d="M3 1h7l3 3v11H3Z" fill="#fff" stroke="#1b7396" stroke-width="1.4"/></svg>
<div style="position:absolute;left:1898px;top:431px;width:18px;height:1px;background:#b4b6cc;box-shadow:0 1px #fff"></div>
<svg class="ic" style="left:1899px;top:437px" width="16" height="16" viewBox="0 0 16 16"><path d="M3 1.5 14 8 3 14.5Z" fill="#14607f"/></svg>
</div></body></html>
